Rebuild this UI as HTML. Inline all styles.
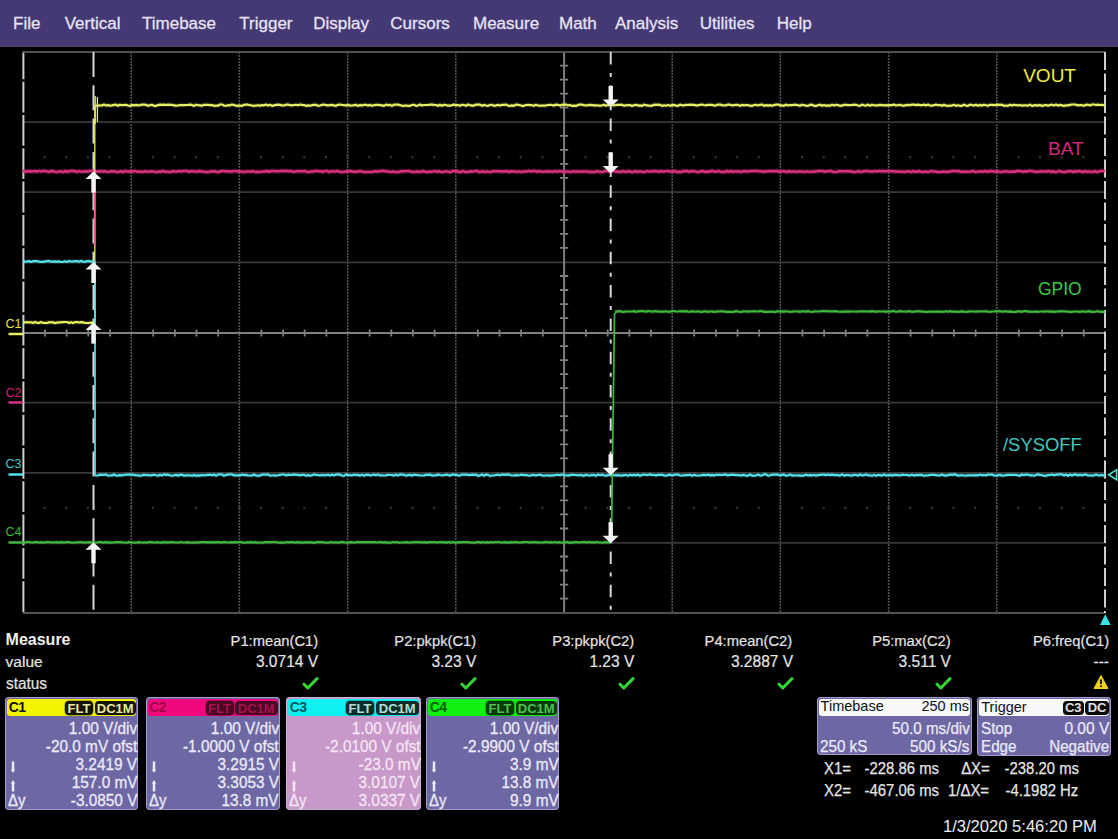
<!DOCTYPE html>
<html><head><meta charset="utf-8">
<style>
html,body{margin:0;padding:0;background:#000;}
body{width:1118px;height:839px;position:relative;overflow:hidden;font-family:"Liberation Sans",sans-serif;}
.t{position:absolute;line-height:1;white-space:pre;}
#menu{position:absolute;left:0;top:0;width:1118px;height:46.7px;background:#443875;box-shadow:inset 0 -2px 0 #4a4068;}
svg{position:absolute;left:0;top:0;}
.pn{position:absolute;background:#6b68a8;border-radius:4px;}
.hd{position:absolute;left:0;top:0;right:0;height:20px;border-radius:4px;}
.bx{position:absolute;top:4.5px;height:13.5px;background:#141414;border-radius:4px;}
</style></head><body>
<div id="menu"></div>
<svg width="1118" height="839" viewBox="0 0 1118 839">
<line x1="131.2" y1="52" x2="131.2" y2="613" stroke="#555555" stroke-width="1.5" stroke-dasharray="2 1"/>
<line x1="239.4" y1="52" x2="239.4" y2="613" stroke="#555555" stroke-width="1.5" stroke-dasharray="2 1"/>
<line x1="347.6" y1="52" x2="347.6" y2="613" stroke="#555555" stroke-width="1.5" stroke-dasharray="2 1"/>
<line x1="455.8" y1="52" x2="455.8" y2="613" stroke="#555555" stroke-width="1.5" stroke-dasharray="2 1"/>
<line x1="672.2" y1="52" x2="672.2" y2="613" stroke="#555555" stroke-width="1.5" stroke-dasharray="2 1"/>
<line x1="780.4" y1="52" x2="780.4" y2="613" stroke="#555555" stroke-width="1.5" stroke-dasharray="2 1"/>
<line x1="888.6" y1="52" x2="888.6" y2="613" stroke="#555555" stroke-width="1.5" stroke-dasharray="2 1"/>
<line x1="996.8" y1="52" x2="996.8" y2="613" stroke="#555555" stroke-width="1.5" stroke-dasharray="2 1"/>
<line x1="23" y1="122.1" x2="1105" y2="122.1" stroke="#383838" stroke-width="1.8"/>
<line x1="23" y1="192.2" x2="1105" y2="192.2" stroke="#383838" stroke-width="1.8"/>
<line x1="23" y1="262.4" x2="1105" y2="262.4" stroke="#383838" stroke-width="1.8"/>
<line x1="23" y1="402.6" x2="1105" y2="402.6" stroke="#383838" stroke-width="1.8"/>
<line x1="23" y1="472.8" x2="1105" y2="472.8" stroke="#383838" stroke-width="1.8"/>
<line x1="23" y1="542.9" x2="1105" y2="542.9" stroke="#383838" stroke-width="1.8"/>
<path d="M43.6,157.2h2M65.3,157.2h2M86.9,157.2h2M108.6,157.2h2M130.2,157.2h2M151.8,157.2h2M173.5,157.2h2M195.1,157.2h2M216.8,157.2h2M238.4,157.2h2M260.0,157.2h2M281.7,157.2h2M303.3,157.2h2M325.0,157.2h2M346.6,157.2h2M368.2,157.2h2M389.9,157.2h2M411.5,157.2h2M433.2,157.2h2M454.8,157.2h2M476.4,157.2h2M498.1,157.2h2M519.7,157.2h2M541.4,157.2h2M563.0,157.2h2M584.6,157.2h2M606.3,157.2h2M627.9,157.2h2M649.6,157.2h2M671.2,157.2h2M692.8,157.2h2M714.5,157.2h2M736.1,157.2h2M757.8,157.2h2M779.4,157.2h2M801.0,157.2h2M822.7,157.2h2M844.3,157.2h2M866.0,157.2h2M887.6,157.2h2M909.2,157.2h2M930.9,157.2h2M952.5,157.2h2M974.2,157.2h2M995.8,157.2h2M1017.4,157.2h2M1039.1,157.2h2M1060.7,157.2h2M1082.4,157.2h2M43.6,507.8h2M65.3,507.8h2M86.9,507.8h2M108.6,507.8h2M130.2,507.8h2M151.8,507.8h2M173.5,507.8h2M195.1,507.8h2M216.8,507.8h2M238.4,507.8h2M260.0,507.8h2M281.7,507.8h2M303.3,507.8h2M325.0,507.8h2M346.6,507.8h2M368.2,507.8h2M389.9,507.8h2M411.5,507.8h2M433.2,507.8h2M454.8,507.8h2M476.4,507.8h2M498.1,507.8h2M519.7,507.8h2M541.4,507.8h2M563.0,507.8h2M584.6,507.8h2M606.3,507.8h2M627.9,507.8h2M649.6,507.8h2M671.2,507.8h2M692.8,507.8h2M714.5,507.8h2M736.1,507.8h2M757.8,507.8h2M779.4,507.8h2M801.0,507.8h2M822.7,507.8h2M844.3,507.8h2M866.0,507.8h2M887.6,507.8h2M909.2,507.8h2M930.9,507.8h2M952.5,507.8h2M974.2,507.8h2M995.8,507.8h2M1017.4,507.8h2M1039.1,507.8h2M1060.7,507.8h2M1082.4,507.8h2" stroke="#3c3c3c" stroke-width="2"/>
<line x1="564.1" y1="52" x2="564.1" y2="613" stroke="#7e7e7e" stroke-width="2"/>
<line x1="23" y1="333" x2="1105" y2="333" stroke="#7e7e7e" stroke-width="2"/>
<path d="M45.0,329.5V336.5M66.7,329.5V336.5M88.3,329.5V336.5M110.0,329.5V336.5M153.2,329.5V336.5M174.9,329.5V336.5M196.5,329.5V336.5M218.2,329.5V336.5M261.4,329.5V336.5M283.1,329.5V336.5M304.7,329.5V336.5M326.4,329.5V336.5M369.6,329.5V336.5M391.3,329.5V336.5M412.9,329.5V336.5M434.6,329.5V336.5M477.8,329.5V336.5M499.5,329.5V336.5M521.1,329.5V336.5M542.8,329.5V336.5M586.0,329.5V336.5M607.7,329.5V336.5M629.3,329.5V336.5M651.0,329.5V336.5M694.2,329.5V336.5M715.9,329.5V336.5M737.5,329.5V336.5M759.2,329.5V336.5M802.4,329.5V336.5M824.1,329.5V336.5M845.7,329.5V336.5M867.4,329.5V336.5M910.6,329.5V336.5M932.3,329.5V336.5M953.9,329.5V336.5M975.6,329.5V336.5M1018.8,329.5V336.5M1040.5,329.5V336.5M1062.1,329.5V336.5M1083.8,329.5V336.5M560,65.6H568.2M560,79.6H568.2M560,93.7H568.2M560,107.7H568.2M560,135.8H568.2M560,149.8H568.2M560,163.8H568.2M560,177.8H568.2M560,205.9H568.2M560,219.9H568.2M560,233.9H568.2M560,247.9H568.2M560,276.0H568.2M560,290.0H568.2M560,304.1H568.2M560,318.1H568.2M560,346.1H568.2M560,360.2H568.2M560,374.2H568.2M560,388.2H568.2M560,416.2H568.2M560,430.3H568.2M560,444.3H568.2M560,458.3H568.2M560,486.4H568.2M560,500.4H568.2M560,514.4H568.2M560,528.5H568.2M560,556.5H568.2M560,570.5H568.2M560,584.6H568.2M560,598.6H568.2" stroke="#7e7e7e" stroke-width="1.8"/>
<line x1="23.4" y1="51" x2="23.4" y2="614" stroke="#d0d0d0" stroke-width="2" stroke-dasharray="28.2 2.5 2.6 0"/>
<line x1="22" y1="52" x2="1105" y2="52" stroke="#505050" stroke-width="2"/>
<line x1="23" y1="613" x2="1105" y2="613" stroke="#525252" stroke-width="2"/>
<line x1="1105" y1="52" x2="1105" y2="613" stroke="#d0d0d0" stroke-width="2" stroke-dasharray="18 3.5"/>
<line x1="93.5" y1="52" x2="93.5" y2="613" stroke="#d8d8d8" stroke-width="2" stroke-dasharray="25 8.3"/>
<line x1="610.7" y1="52" x2="610.7" y2="613" stroke="#d8d8d8" stroke-width="2" stroke-dasharray="12.5 8.5 4 8.3"/>
<polyline points="23.0,171.3 25.0,171.1 27.0,171.7 29.0,171.0 31.0,171.5 33.0,171.3 35.0,171.0 37.0,171.5 39.0,170.9 41.0,171.4 43.0,171.0 45.0,171.0 47.0,171.4 49.0,171.9 51.0,171.0 53.0,171.2 55.0,171.7 57.0,172.0 59.0,171.6 61.0,171.4 63.0,172.1 65.0,171.0 67.0,171.9 69.0,171.2 71.0,171.1 73.0,171.0 75.0,171.3 77.0,171.9 79.0,171.1 81.0,171.6 83.0,171.7 85.0,171.3 87.0,171.6 89.0,171.0 91.0,171.0 93.0,171.1 95.0,171.7 97.0,171.4 99.0,171.3 101.0,171.6 103.0,171.4 105.0,171.3 107.0,171.9 109.0,171.7 111.0,171.2 113.0,171.6 115.0,171.5 117.0,172.0 119.0,171.8 121.0,171.2 123.0,172.1 125.0,171.0 127.0,171.4 129.0,171.8 131.0,171.1 133.0,171.5 135.0,170.9 137.0,171.7 139.0,171.8 141.0,171.6 143.0,172.0 145.0,171.3 147.0,171.7 149.0,171.6 151.0,171.6 153.0,171.4 155.0,171.9 157.0,172.0 159.0,171.5 161.0,171.7 163.0,171.0 165.0,171.7 167.0,171.7 169.0,172.1 171.0,171.9 173.0,171.2 175.0,171.4 177.0,171.7 179.0,170.9 181.0,171.5 183.0,171.1 185.0,171.0 187.0,171.0 189.0,171.8 191.0,171.1 193.0,171.2 195.0,171.4 197.0,171.9 199.0,171.0 201.0,171.4 203.0,171.6 205.0,172.0 207.0,171.9 209.0,171.9 211.0,171.2 213.0,171.4 215.0,171.3 217.0,172.0 219.0,172.0 221.0,171.1 223.0,171.1 225.0,171.2 227.0,171.2 229.0,171.5 231.0,171.6 233.0,171.2 235.0,170.9 237.0,171.4 239.0,171.3 241.0,171.6 243.0,172.0 245.0,171.7 247.0,171.5 249.0,171.6 251.0,171.7 253.0,171.0 255.0,172.0 257.0,171.8 259.0,171.9 261.0,171.9 263.0,171.4 265.0,171.4 267.0,171.0 269.0,171.7 271.0,171.0 273.0,171.0 275.0,171.2 277.0,171.1 279.0,171.3 281.0,171.0 283.0,170.9 285.0,171.1 287.0,171.0 289.0,171.3 291.0,170.9 293.0,171.9 295.0,171.6 297.0,171.1 299.0,171.2 301.0,171.3 303.0,171.3 305.0,171.0 307.0,171.9 309.0,172.1 311.0,171.5 313.0,171.5 315.0,171.0 317.0,171.0 319.0,171.3 321.0,171.2 323.0,171.9 325.0,171.1 327.0,170.9 329.0,172.0 331.0,171.5 333.0,171.1 335.0,171.6 337.0,170.9 339.0,171.5 341.0,172.1 343.0,171.9 345.0,171.7 347.0,171.2 349.0,171.3 351.0,171.1 353.0,171.8 355.0,171.5 357.0,171.8 359.0,171.3 361.0,171.2 363.0,171.9 365.0,172.1 367.0,171.9 369.0,171.9 371.0,171.9 373.0,171.8 375.0,171.2 377.0,171.5 379.0,171.3 381.0,170.9 383.0,170.9 385.0,171.2 387.0,171.2 389.0,171.7 391.0,172.0 393.0,171.4 395.0,172.0 397.0,172.1 399.0,172.0 401.0,171.3 403.0,171.2 405.0,171.2 407.0,171.1 409.0,171.1 411.0,171.6 413.0,172.0 415.0,171.9 417.0,171.5 419.0,171.7 421.0,171.9 423.0,171.0 425.0,171.7 427.0,172.0 429.0,171.8 431.0,171.8 433.0,171.5 435.0,171.1 437.0,171.8 439.0,171.3 441.0,171.9 443.0,172.1 445.0,171.4 447.0,171.4 449.0,172.0 451.0,171.8 453.0,171.1 455.0,171.1 457.0,171.1 459.0,172.0 461.0,171.9 463.0,171.1 465.0,171.9 467.0,172.1 469.0,171.7 471.0,171.3 473.0,171.6 475.0,171.1 477.0,170.9 479.0,172.1 481.0,171.7 483.0,171.5 485.0,172.0 487.0,171.4 489.0,171.9 491.0,171.9 493.0,171.2 495.0,171.2 497.0,171.3 499.0,171.2 501.0,171.6 503.0,171.2 505.0,171.4 507.0,171.1 509.0,172.0 511.0,171.3 513.0,171.4 515.0,171.6 517.0,172.0 519.0,171.4 521.0,172.0 523.0,171.5 525.0,171.5 527.0,171.5 529.0,170.9 531.0,171.4 533.0,171.1 535.0,170.9 537.0,171.9 539.0,171.1 541.0,171.5 543.0,171.8 545.0,171.6 547.0,171.3 549.0,171.5 551.0,171.6 553.0,171.8 555.0,171.0 557.0,171.6 559.0,171.2 561.0,171.2 563.0,171.8 565.0,171.5 567.0,171.6 569.0,171.8 571.0,172.0 573.0,171.4 575.0,171.6 577.0,171.5 579.0,171.5 581.0,171.7 583.0,171.4 585.0,171.5 587.0,171.5 589.0,172.0 591.0,171.7 593.0,172.0 595.0,172.0 597.0,171.2 599.0,171.6 601.0,172.0 603.0,171.9 605.0,171.1 607.0,171.0 609.0,171.4 611.0,171.0 613.0,171.2 615.0,171.0 617.0,171.7 619.0,171.8 621.0,172.0 623.0,171.1 625.0,171.8 627.0,171.7 629.0,171.1 631.0,172.0 633.0,172.1 635.0,171.2 637.0,172.0 639.0,171.4 641.0,171.5 643.0,172.1 645.0,171.9 647.0,171.1 649.0,171.4 651.0,171.5 653.0,171.3 655.0,171.1 657.0,171.3 659.0,171.8 661.0,170.9 663.0,171.6 665.0,171.4 667.0,170.9 669.0,171.3 671.0,171.6 673.0,171.5 675.0,171.0 677.0,172.1 679.0,171.8 681.0,172.1 683.0,171.0 685.0,171.2 687.0,170.9 689.0,171.8 691.0,171.2 693.0,171.1 695.0,171.4 697.0,172.0 699.0,171.9 701.0,171.2 703.0,171.1 705.0,172.0 707.0,171.6 709.0,171.7 711.0,171.0 713.0,171.0 715.0,171.7 717.0,171.4 719.0,171.0 721.0,172.0 723.0,171.7 725.0,171.9 727.0,171.0 729.0,171.9 731.0,171.0 733.0,171.9 735.0,171.4 737.0,171.3 739.0,171.6 741.0,172.0 743.0,171.2 745.0,171.1 747.0,171.5 749.0,171.2 751.0,171.0 753.0,171.1 755.0,171.0 757.0,171.1 759.0,171.3 761.0,171.3 763.0,171.8 765.0,171.2 767.0,171.5 769.0,171.1 771.0,171.3 773.0,170.9 775.0,171.2 777.0,170.9 779.0,171.8 781.0,171.6 783.0,171.1 785.0,171.5 787.0,172.0 789.0,171.0 791.0,171.9 793.0,171.4 795.0,171.5 797.0,171.9 799.0,171.4 801.0,171.5 803.0,171.7 805.0,172.1 807.0,171.3 809.0,171.9 811.0,171.7 813.0,171.7 815.0,171.4 817.0,171.3 819.0,171.0 821.0,171.1 823.0,171.0 825.0,171.8 827.0,171.2 829.0,171.1 831.0,171.0 833.0,171.9 835.0,171.9 837.0,171.7 839.0,171.2 841.0,171.2 843.0,171.3 845.0,171.5 847.0,171.1 849.0,171.4 851.0,171.2 853.0,172.1 855.0,172.1 857.0,171.6 859.0,171.2 861.0,172.1 863.0,171.3 865.0,171.3 867.0,170.9 869.0,171.4 871.0,171.5 873.0,171.5 875.0,171.1 877.0,171.5 879.0,170.9 881.0,171.2 883.0,171.0 885.0,171.4 887.0,171.0 889.0,170.9 891.0,171.3 893.0,171.2 895.0,171.6 897.0,171.5 899.0,171.8 901.0,171.7 903.0,171.8 905.0,172.0 907.0,171.4 909.0,171.3 911.0,172.1 913.0,171.1 915.0,171.8 917.0,171.7 919.0,171.0 921.0,171.9 923.0,172.0 925.0,171.7 927.0,171.8 929.0,171.9 931.0,171.1 933.0,171.5 935.0,171.5 937.0,171.9 939.0,171.9 941.0,171.9 943.0,171.6 945.0,172.0 947.0,171.7 949.0,171.7 951.0,171.2 953.0,170.9 955.0,171.1 957.0,171.3 959.0,171.0 961.0,171.9 963.0,171.6 965.0,171.7 967.0,171.7 969.0,171.7 971.0,171.5 973.0,170.9 975.0,171.9 977.0,171.8 979.0,171.5 981.0,171.5 983.0,171.7 985.0,171.0 987.0,171.8 989.0,171.2 991.0,171.0 993.0,171.2 995.0,171.8 997.0,171.1 999.0,171.8 1001.0,172.1 1003.0,171.5 1005.0,171.4 1007.0,171.5 1009.0,171.7 1011.0,171.8 1013.0,171.6 1015.0,171.7 1017.0,171.0 1019.0,171.1 1021.0,171.2 1023.0,171.8 1025.0,171.3 1027.0,171.6 1029.0,170.9 1031.0,171.0 1033.0,171.2 1035.0,171.7 1037.0,171.7 1039.0,171.7 1041.0,171.2 1043.0,171.5 1045.0,171.5 1047.0,171.5 1049.0,171.0 1051.0,172.0 1053.0,171.1 1055.0,172.1 1057.0,172.0 1059.0,170.9 1061.0,171.5 1063.0,171.9 1065.0,172.1 1067.0,171.4 1069.0,171.2 1071.0,171.2 1073.0,172.0 1075.0,171.2 1077.0,171.6 1079.0,171.1 1081.0,171.5 1083.0,172.0 1085.0,171.1 1087.0,171.9 1089.0,171.5 1091.0,172.0 1093.0,171.7 1095.0,171.2 1097.0,172.0 1099.0,171.5 1101.0,170.9 1103.0,170.9 1105.0,171.5" fill="none" stroke="#d83080" stroke-width="4.9" stroke-opacity="0.3" stroke-linejoin="round"/>
<polyline points="23.0,171.3 25.0,171.1 27.0,171.7 29.0,171.0 31.0,171.5 33.0,171.3 35.0,171.0 37.0,171.5 39.0,170.9 41.0,171.4 43.0,171.0 45.0,171.0 47.0,171.4 49.0,171.9 51.0,171.0 53.0,171.2 55.0,171.7 57.0,172.0 59.0,171.6 61.0,171.4 63.0,172.1 65.0,171.0 67.0,171.9 69.0,171.2 71.0,171.1 73.0,171.0 75.0,171.3 77.0,171.9 79.0,171.1 81.0,171.6 83.0,171.7 85.0,171.3 87.0,171.6 89.0,171.0 91.0,171.0 93.0,171.1 95.0,171.7 97.0,171.4 99.0,171.3 101.0,171.6 103.0,171.4 105.0,171.3 107.0,171.9 109.0,171.7 111.0,171.2 113.0,171.6 115.0,171.5 117.0,172.0 119.0,171.8 121.0,171.2 123.0,172.1 125.0,171.0 127.0,171.4 129.0,171.8 131.0,171.1 133.0,171.5 135.0,170.9 137.0,171.7 139.0,171.8 141.0,171.6 143.0,172.0 145.0,171.3 147.0,171.7 149.0,171.6 151.0,171.6 153.0,171.4 155.0,171.9 157.0,172.0 159.0,171.5 161.0,171.7 163.0,171.0 165.0,171.7 167.0,171.7 169.0,172.1 171.0,171.9 173.0,171.2 175.0,171.4 177.0,171.7 179.0,170.9 181.0,171.5 183.0,171.1 185.0,171.0 187.0,171.0 189.0,171.8 191.0,171.1 193.0,171.2 195.0,171.4 197.0,171.9 199.0,171.0 201.0,171.4 203.0,171.6 205.0,172.0 207.0,171.9 209.0,171.9 211.0,171.2 213.0,171.4 215.0,171.3 217.0,172.0 219.0,172.0 221.0,171.1 223.0,171.1 225.0,171.2 227.0,171.2 229.0,171.5 231.0,171.6 233.0,171.2 235.0,170.9 237.0,171.4 239.0,171.3 241.0,171.6 243.0,172.0 245.0,171.7 247.0,171.5 249.0,171.6 251.0,171.7 253.0,171.0 255.0,172.0 257.0,171.8 259.0,171.9 261.0,171.9 263.0,171.4 265.0,171.4 267.0,171.0 269.0,171.7 271.0,171.0 273.0,171.0 275.0,171.2 277.0,171.1 279.0,171.3 281.0,171.0 283.0,170.9 285.0,171.1 287.0,171.0 289.0,171.3 291.0,170.9 293.0,171.9 295.0,171.6 297.0,171.1 299.0,171.2 301.0,171.3 303.0,171.3 305.0,171.0 307.0,171.9 309.0,172.1 311.0,171.5 313.0,171.5 315.0,171.0 317.0,171.0 319.0,171.3 321.0,171.2 323.0,171.9 325.0,171.1 327.0,170.9 329.0,172.0 331.0,171.5 333.0,171.1 335.0,171.6 337.0,170.9 339.0,171.5 341.0,172.1 343.0,171.9 345.0,171.7 347.0,171.2 349.0,171.3 351.0,171.1 353.0,171.8 355.0,171.5 357.0,171.8 359.0,171.3 361.0,171.2 363.0,171.9 365.0,172.1 367.0,171.9 369.0,171.9 371.0,171.9 373.0,171.8 375.0,171.2 377.0,171.5 379.0,171.3 381.0,170.9 383.0,170.9 385.0,171.2 387.0,171.2 389.0,171.7 391.0,172.0 393.0,171.4 395.0,172.0 397.0,172.1 399.0,172.0 401.0,171.3 403.0,171.2 405.0,171.2 407.0,171.1 409.0,171.1 411.0,171.6 413.0,172.0 415.0,171.9 417.0,171.5 419.0,171.7 421.0,171.9 423.0,171.0 425.0,171.7 427.0,172.0 429.0,171.8 431.0,171.8 433.0,171.5 435.0,171.1 437.0,171.8 439.0,171.3 441.0,171.9 443.0,172.1 445.0,171.4 447.0,171.4 449.0,172.0 451.0,171.8 453.0,171.1 455.0,171.1 457.0,171.1 459.0,172.0 461.0,171.9 463.0,171.1 465.0,171.9 467.0,172.1 469.0,171.7 471.0,171.3 473.0,171.6 475.0,171.1 477.0,170.9 479.0,172.1 481.0,171.7 483.0,171.5 485.0,172.0 487.0,171.4 489.0,171.9 491.0,171.9 493.0,171.2 495.0,171.2 497.0,171.3 499.0,171.2 501.0,171.6 503.0,171.2 505.0,171.4 507.0,171.1 509.0,172.0 511.0,171.3 513.0,171.4 515.0,171.6 517.0,172.0 519.0,171.4 521.0,172.0 523.0,171.5 525.0,171.5 527.0,171.5 529.0,170.9 531.0,171.4 533.0,171.1 535.0,170.9 537.0,171.9 539.0,171.1 541.0,171.5 543.0,171.8 545.0,171.6 547.0,171.3 549.0,171.5 551.0,171.6 553.0,171.8 555.0,171.0 557.0,171.6 559.0,171.2 561.0,171.2 563.0,171.8 565.0,171.5 567.0,171.6 569.0,171.8 571.0,172.0 573.0,171.4 575.0,171.6 577.0,171.5 579.0,171.5 581.0,171.7 583.0,171.4 585.0,171.5 587.0,171.5 589.0,172.0 591.0,171.7 593.0,172.0 595.0,172.0 597.0,171.2 599.0,171.6 601.0,172.0 603.0,171.9 605.0,171.1 607.0,171.0 609.0,171.4 611.0,171.0 613.0,171.2 615.0,171.0 617.0,171.7 619.0,171.8 621.0,172.0 623.0,171.1 625.0,171.8 627.0,171.7 629.0,171.1 631.0,172.0 633.0,172.1 635.0,171.2 637.0,172.0 639.0,171.4 641.0,171.5 643.0,172.1 645.0,171.9 647.0,171.1 649.0,171.4 651.0,171.5 653.0,171.3 655.0,171.1 657.0,171.3 659.0,171.8 661.0,170.9 663.0,171.6 665.0,171.4 667.0,170.9 669.0,171.3 671.0,171.6 673.0,171.5 675.0,171.0 677.0,172.1 679.0,171.8 681.0,172.1 683.0,171.0 685.0,171.2 687.0,170.9 689.0,171.8 691.0,171.2 693.0,171.1 695.0,171.4 697.0,172.0 699.0,171.9 701.0,171.2 703.0,171.1 705.0,172.0 707.0,171.6 709.0,171.7 711.0,171.0 713.0,171.0 715.0,171.7 717.0,171.4 719.0,171.0 721.0,172.0 723.0,171.7 725.0,171.9 727.0,171.0 729.0,171.9 731.0,171.0 733.0,171.9 735.0,171.4 737.0,171.3 739.0,171.6 741.0,172.0 743.0,171.2 745.0,171.1 747.0,171.5 749.0,171.2 751.0,171.0 753.0,171.1 755.0,171.0 757.0,171.1 759.0,171.3 761.0,171.3 763.0,171.8 765.0,171.2 767.0,171.5 769.0,171.1 771.0,171.3 773.0,170.9 775.0,171.2 777.0,170.9 779.0,171.8 781.0,171.6 783.0,171.1 785.0,171.5 787.0,172.0 789.0,171.0 791.0,171.9 793.0,171.4 795.0,171.5 797.0,171.9 799.0,171.4 801.0,171.5 803.0,171.7 805.0,172.1 807.0,171.3 809.0,171.9 811.0,171.7 813.0,171.7 815.0,171.4 817.0,171.3 819.0,171.0 821.0,171.1 823.0,171.0 825.0,171.8 827.0,171.2 829.0,171.1 831.0,171.0 833.0,171.9 835.0,171.9 837.0,171.7 839.0,171.2 841.0,171.2 843.0,171.3 845.0,171.5 847.0,171.1 849.0,171.4 851.0,171.2 853.0,172.1 855.0,172.1 857.0,171.6 859.0,171.2 861.0,172.1 863.0,171.3 865.0,171.3 867.0,170.9 869.0,171.4 871.0,171.5 873.0,171.5 875.0,171.1 877.0,171.5 879.0,170.9 881.0,171.2 883.0,171.0 885.0,171.4 887.0,171.0 889.0,170.9 891.0,171.3 893.0,171.2 895.0,171.6 897.0,171.5 899.0,171.8 901.0,171.7 903.0,171.8 905.0,172.0 907.0,171.4 909.0,171.3 911.0,172.1 913.0,171.1 915.0,171.8 917.0,171.7 919.0,171.0 921.0,171.9 923.0,172.0 925.0,171.7 927.0,171.8 929.0,171.9 931.0,171.1 933.0,171.5 935.0,171.5 937.0,171.9 939.0,171.9 941.0,171.9 943.0,171.6 945.0,172.0 947.0,171.7 949.0,171.7 951.0,171.2 953.0,170.9 955.0,171.1 957.0,171.3 959.0,171.0 961.0,171.9 963.0,171.6 965.0,171.7 967.0,171.7 969.0,171.7 971.0,171.5 973.0,170.9 975.0,171.9 977.0,171.8 979.0,171.5 981.0,171.5 983.0,171.7 985.0,171.0 987.0,171.8 989.0,171.2 991.0,171.0 993.0,171.2 995.0,171.8 997.0,171.1 999.0,171.8 1001.0,172.1 1003.0,171.5 1005.0,171.4 1007.0,171.5 1009.0,171.7 1011.0,171.8 1013.0,171.6 1015.0,171.7 1017.0,171.0 1019.0,171.1 1021.0,171.2 1023.0,171.8 1025.0,171.3 1027.0,171.6 1029.0,170.9 1031.0,171.0 1033.0,171.2 1035.0,171.7 1037.0,171.7 1039.0,171.7 1041.0,171.2 1043.0,171.5 1045.0,171.5 1047.0,171.5 1049.0,171.0 1051.0,172.0 1053.0,171.1 1055.0,172.1 1057.0,172.0 1059.0,170.9 1061.0,171.5 1063.0,171.9 1065.0,172.1 1067.0,171.4 1069.0,171.2 1071.0,171.2 1073.0,172.0 1075.0,171.2 1077.0,171.6 1079.0,171.1 1081.0,171.5 1083.0,172.0 1085.0,171.1 1087.0,171.9 1089.0,171.5 1091.0,172.0 1093.0,171.7 1095.0,171.2 1097.0,172.0 1099.0,171.5 1101.0,170.9 1103.0,170.9 1105.0,171.5" fill="none" stroke="#d83080" stroke-width="2.5" stroke-linejoin="round"/>
<polyline points="23.0,322.4 25.0,322.3 27.0,322.1 29.0,322.3 31.0,322.3 33.0,322.9 35.0,321.9 37.0,322.8 39.0,322.9 41.0,322.0 43.0,323.0 45.0,322.8 47.0,323.0 49.0,322.2 51.0,322.3 53.0,322.4 55.0,323.1 57.0,322.6 59.0,322.3 61.0,322.4 63.0,322.2 65.0,322.0 67.0,322.0 69.0,322.9 71.0,322.2 73.0,323.0 75.0,322.2 77.0,322.2 79.0,322.5 81.0,322.1 83.0,322.3 85.0,323.0 87.0,323.0 89.0,322.9 91.0,322.7 93.0,323.0 94.8,322.5" fill="none" stroke="#e6f064" stroke-width="4.6" stroke-opacity="0.15" stroke-linejoin="round"/>
<polyline points="23.0,322.4 25.0,322.3 27.0,322.1 29.0,322.3 31.0,322.3 33.0,322.9 35.0,321.9 37.0,322.8 39.0,322.9 41.0,322.0 43.0,323.0 45.0,322.8 47.0,323.0 49.0,322.2 51.0,322.3 53.0,322.4 55.0,323.1 57.0,322.6 59.0,322.3 61.0,322.4 63.0,322.2 65.0,322.0 67.0,322.0 69.0,322.9 71.0,322.2 73.0,323.0 75.0,322.2 77.0,322.2 79.0,322.5 81.0,322.1 83.0,322.3 85.0,323.0 87.0,323.0 89.0,322.9 91.0,322.7 93.0,323.0 94.8,322.5" fill="none" stroke="#e6f064" stroke-width="2.2" stroke-linejoin="round"/>
<path d="M94.8,322V105" stroke="#e6f064" stroke-width="1.3"/>
<path d="M95.2,96V124M97.4,97V122" stroke="#e6f064" stroke-width="1.3"/>
<polyline points="95.5,105.5 98.0,105.8 100.0,105.3 102.0,105.5 104.0,104.6 106.0,105.5 108.0,105.1 110.0,105.6 112.0,105.4 114.0,104.9 116.0,104.6 118.0,105.8 120.0,104.7 122.0,105.2 124.0,105.0 126.0,104.9 128.0,105.5 130.0,105.9 132.0,104.9 134.0,105.4 136.0,104.9 138.0,105.3 140.0,105.1 142.0,104.7 144.0,104.7 146.0,104.8 148.0,105.8 150.0,105.2 152.0,104.8 154.0,105.8 156.0,105.9 158.0,105.1 160.0,104.7 162.0,104.8 164.0,104.6 166.0,105.0 168.0,104.6 170.0,104.8 172.0,104.9 174.0,105.3 176.0,105.7 178.0,105.5 180.0,105.1 182.0,105.1 184.0,105.2 186.0,105.0 188.0,105.0 190.0,104.6 192.0,104.9 194.0,105.9 196.0,104.7 198.0,105.2 200.0,105.4 202.0,105.7 204.0,104.8 206.0,104.9 208.0,104.8 210.0,105.1 212.0,105.1 214.0,105.8 216.0,105.7 218.0,105.7 220.0,104.5 222.0,104.5 224.0,105.5 226.0,105.8 228.0,105.2 230.0,105.3 232.0,104.5 234.0,105.0 236.0,105.8 238.0,105.7 240.0,105.7 242.0,105.9 244.0,104.8 246.0,104.7 248.0,104.7 250.0,105.2 252.0,105.5 254.0,105.8 256.0,105.5 258.0,105.4 260.0,105.6 262.0,105.1 264.0,105.3 266.0,104.6 268.0,105.6 270.0,104.8 272.0,105.8 274.0,105.4 276.0,104.9 278.0,104.7 280.0,104.9 282.0,105.4 284.0,105.5 286.0,104.7 288.0,104.6 290.0,105.2 292.0,105.3 294.0,105.0 296.0,104.8 298.0,105.3 300.0,104.5 302.0,104.9 304.0,105.1 306.0,105.8 308.0,105.4 310.0,105.7 312.0,105.2 314.0,104.8 316.0,104.8 318.0,105.8 320.0,105.5 322.0,104.9 324.0,104.5 326.0,105.2 328.0,105.4 330.0,105.1 332.0,104.9 334.0,105.4 336.0,105.8 338.0,104.8 340.0,104.5 342.0,105.0 344.0,105.1 346.0,105.5 348.0,104.8 350.0,105.6 352.0,105.5 354.0,105.2 356.0,104.8 358.0,105.9 360.0,104.9 362.0,105.6 364.0,104.8 366.0,104.8 368.0,105.6 370.0,104.9 372.0,105.8 374.0,105.2 376.0,104.8 378.0,104.8 380.0,105.1 382.0,105.4 384.0,105.8 386.0,104.7 388.0,105.1 390.0,104.8 392.0,105.9 394.0,104.7 396.0,104.6 398.0,104.6 400.0,105.1 402.0,105.8 404.0,105.7 406.0,105.5 408.0,105.9 410.0,105.8 412.0,105.0 414.0,104.8 416.0,105.8 418.0,105.5 420.0,104.5 422.0,105.4 424.0,105.0 426.0,105.0 428.0,105.0 430.0,104.7 432.0,104.5 434.0,104.9 436.0,105.0 438.0,105.8 440.0,104.7 442.0,105.8 444.0,104.8 446.0,105.0 448.0,105.7 450.0,105.7 452.0,105.1 454.0,104.6 456.0,105.2 458.0,105.0 460.0,105.8 462.0,104.8 464.0,105.0 466.0,105.8 468.0,104.5 470.0,105.1 472.0,105.6 474.0,105.6 476.0,104.6 478.0,104.5 480.0,104.6 482.0,105.8 484.0,104.9 486.0,105.5 488.0,105.8 490.0,105.0 492.0,104.9 494.0,105.8 496.0,105.4 498.0,104.9 500.0,105.5 502.0,104.9 504.0,104.9 506.0,104.5 508.0,105.6 510.0,105.8 512.0,105.4 514.0,105.8 516.0,104.5 518.0,104.8 520.0,105.2 522.0,105.8 524.0,105.8 526.0,105.0 528.0,104.9 530.0,105.1 532.0,105.2 534.0,105.8 536.0,104.8 538.0,105.6 540.0,105.5 542.0,105.7 544.0,105.6 546.0,105.4 548.0,105.0 550.0,104.9 552.0,105.0 554.0,105.6 556.0,104.6 558.0,104.8 560.0,105.6 562.0,104.8 564.0,104.6 566.0,104.5 568.0,105.3 570.0,105.0 572.0,105.9 574.0,105.7 576.0,105.9 578.0,104.9 580.0,104.6 582.0,104.6 584.0,105.2 586.0,105.5 588.0,105.1 590.0,104.8 592.0,105.1 594.0,105.4 596.0,105.4 598.0,105.5 600.0,105.7 602.0,105.4 604.0,104.7 606.0,105.7 608.0,104.9 610.0,105.3 612.0,105.0 614.0,105.5 616.0,104.8 618.0,104.8 620.0,104.8 622.0,104.7 624.0,105.7 626.0,105.3 628.0,105.0 630.0,105.1 632.0,105.9 634.0,105.2 636.0,104.8 638.0,105.6 640.0,105.4 642.0,105.9 644.0,104.6 646.0,105.2 648.0,105.6 650.0,105.7 652.0,105.8 654.0,104.6 656.0,104.9 658.0,104.7 660.0,104.8 662.0,105.9 664.0,105.3 666.0,105.8 668.0,105.0 670.0,105.7 672.0,105.1 674.0,104.9 676.0,105.6 678.0,105.8 680.0,104.6 682.0,105.3 684.0,105.4 686.0,104.8 688.0,105.0 690.0,104.7 692.0,104.8 694.0,104.9 696.0,105.3 698.0,105.4 700.0,104.8 702.0,104.5 704.0,105.0 706.0,105.4 708.0,104.8 710.0,104.9 712.0,104.8 714.0,105.6 716.0,105.3 718.0,104.6 720.0,104.6 722.0,105.1 724.0,105.3 726.0,105.4 728.0,104.6 730.0,104.7 732.0,105.5 734.0,105.1 736.0,104.9 738.0,104.9 740.0,105.8 742.0,104.9 744.0,105.3 746.0,105.0 748.0,105.1 750.0,105.7 752.0,105.9 754.0,105.0 756.0,104.8 758.0,105.5 760.0,104.8 762.0,104.5 764.0,105.8 766.0,105.1 768.0,105.6 770.0,105.1 772.0,105.7 774.0,105.1 776.0,104.7 778.0,104.5 780.0,105.3 782.0,105.4 784.0,105.8 786.0,104.6 788.0,105.4 790.0,105.0 792.0,105.2 794.0,104.7 796.0,104.9 798.0,105.2 800.0,105.8 802.0,104.7 804.0,105.2 806.0,105.6 808.0,105.9 810.0,104.8 812.0,104.7 814.0,105.8 816.0,105.9 818.0,105.2 820.0,104.6 822.0,105.8 824.0,105.0 826.0,105.8 828.0,105.4 830.0,105.7 832.0,104.7 834.0,105.6 836.0,104.8 838.0,105.1 840.0,105.7 842.0,105.7 844.0,104.8 846.0,104.8 848.0,105.1 850.0,105.2 852.0,105.0 854.0,104.7 856.0,104.8 858.0,105.5 860.0,105.8 862.0,104.6 864.0,105.3 866.0,105.6 868.0,104.6 870.0,105.7 872.0,104.7 874.0,105.3 876.0,105.3 878.0,105.4 880.0,104.9 882.0,105.1 884.0,105.3 886.0,105.1 888.0,105.4 890.0,105.1 892.0,105.1 894.0,104.5 896.0,105.4 898.0,105.2 900.0,104.8 902.0,105.6 904.0,105.6 906.0,105.1 908.0,104.8 910.0,105.2 912.0,104.6 914.0,104.7 916.0,105.1 918.0,104.6 920.0,105.1 922.0,105.2 924.0,104.6 926.0,105.4 928.0,104.6 930.0,105.5 932.0,105.6 934.0,105.2 936.0,104.6 938.0,105.2 940.0,105.0 942.0,105.8 944.0,104.7 946.0,105.7 948.0,105.9 950.0,105.5 952.0,105.6 954.0,104.8 956.0,105.9 958.0,105.2 960.0,105.8 962.0,105.8 964.0,104.7 966.0,105.6 968.0,105.8 970.0,104.6 972.0,105.0 974.0,105.6 976.0,104.7 978.0,105.8 980.0,104.9 982.0,105.6 984.0,104.7 986.0,105.2 988.0,105.8 990.0,104.8 992.0,104.9 994.0,105.2 996.0,104.9 998.0,104.6 1000.0,104.8 1002.0,104.7 1004.0,105.8 1006.0,105.5 1008.0,105.8 1010.0,104.7 1012.0,105.6 1014.0,104.7 1016.0,105.2 1018.0,105.4 1020.0,105.0 1022.0,105.7 1024.0,105.3 1026.0,105.3 1028.0,105.7 1030.0,104.6 1032.0,105.9 1034.0,105.4 1036.0,105.1 1038.0,105.6 1040.0,104.9 1042.0,105.9 1044.0,105.3 1046.0,105.0 1048.0,105.6 1050.0,105.1 1052.0,104.7 1054.0,105.5 1056.0,104.6 1058.0,105.6 1060.0,104.9 1062.0,105.4 1064.0,105.9 1066.0,105.3 1068.0,105.4 1070.0,104.9 1072.0,104.5 1074.0,104.5 1076.0,104.7 1078.0,105.4 1080.0,105.1 1082.0,105.2 1084.0,105.8 1086.0,104.7 1088.0,104.8 1090.0,105.4 1092.0,104.5 1094.0,104.5 1096.0,105.0 1098.0,104.6 1100.0,105.0 1102.0,104.8 1104.0,105.3 1105.0,105.3" fill="none" stroke="#e6f064" stroke-width="4.6" stroke-opacity="0.15" stroke-linejoin="round"/>
<polyline points="95.5,105.5 98.0,105.8 100.0,105.3 102.0,105.5 104.0,104.6 106.0,105.5 108.0,105.1 110.0,105.6 112.0,105.4 114.0,104.9 116.0,104.6 118.0,105.8 120.0,104.7 122.0,105.2 124.0,105.0 126.0,104.9 128.0,105.5 130.0,105.9 132.0,104.9 134.0,105.4 136.0,104.9 138.0,105.3 140.0,105.1 142.0,104.7 144.0,104.7 146.0,104.8 148.0,105.8 150.0,105.2 152.0,104.8 154.0,105.8 156.0,105.9 158.0,105.1 160.0,104.7 162.0,104.8 164.0,104.6 166.0,105.0 168.0,104.6 170.0,104.8 172.0,104.9 174.0,105.3 176.0,105.7 178.0,105.5 180.0,105.1 182.0,105.1 184.0,105.2 186.0,105.0 188.0,105.0 190.0,104.6 192.0,104.9 194.0,105.9 196.0,104.7 198.0,105.2 200.0,105.4 202.0,105.7 204.0,104.8 206.0,104.9 208.0,104.8 210.0,105.1 212.0,105.1 214.0,105.8 216.0,105.7 218.0,105.7 220.0,104.5 222.0,104.5 224.0,105.5 226.0,105.8 228.0,105.2 230.0,105.3 232.0,104.5 234.0,105.0 236.0,105.8 238.0,105.7 240.0,105.7 242.0,105.9 244.0,104.8 246.0,104.7 248.0,104.7 250.0,105.2 252.0,105.5 254.0,105.8 256.0,105.5 258.0,105.4 260.0,105.6 262.0,105.1 264.0,105.3 266.0,104.6 268.0,105.6 270.0,104.8 272.0,105.8 274.0,105.4 276.0,104.9 278.0,104.7 280.0,104.9 282.0,105.4 284.0,105.5 286.0,104.7 288.0,104.6 290.0,105.2 292.0,105.3 294.0,105.0 296.0,104.8 298.0,105.3 300.0,104.5 302.0,104.9 304.0,105.1 306.0,105.8 308.0,105.4 310.0,105.7 312.0,105.2 314.0,104.8 316.0,104.8 318.0,105.8 320.0,105.5 322.0,104.9 324.0,104.5 326.0,105.2 328.0,105.4 330.0,105.1 332.0,104.9 334.0,105.4 336.0,105.8 338.0,104.8 340.0,104.5 342.0,105.0 344.0,105.1 346.0,105.5 348.0,104.8 350.0,105.6 352.0,105.5 354.0,105.2 356.0,104.8 358.0,105.9 360.0,104.9 362.0,105.6 364.0,104.8 366.0,104.8 368.0,105.6 370.0,104.9 372.0,105.8 374.0,105.2 376.0,104.8 378.0,104.8 380.0,105.1 382.0,105.4 384.0,105.8 386.0,104.7 388.0,105.1 390.0,104.8 392.0,105.9 394.0,104.7 396.0,104.6 398.0,104.6 400.0,105.1 402.0,105.8 404.0,105.7 406.0,105.5 408.0,105.9 410.0,105.8 412.0,105.0 414.0,104.8 416.0,105.8 418.0,105.5 420.0,104.5 422.0,105.4 424.0,105.0 426.0,105.0 428.0,105.0 430.0,104.7 432.0,104.5 434.0,104.9 436.0,105.0 438.0,105.8 440.0,104.7 442.0,105.8 444.0,104.8 446.0,105.0 448.0,105.7 450.0,105.7 452.0,105.1 454.0,104.6 456.0,105.2 458.0,105.0 460.0,105.8 462.0,104.8 464.0,105.0 466.0,105.8 468.0,104.5 470.0,105.1 472.0,105.6 474.0,105.6 476.0,104.6 478.0,104.5 480.0,104.6 482.0,105.8 484.0,104.9 486.0,105.5 488.0,105.8 490.0,105.0 492.0,104.9 494.0,105.8 496.0,105.4 498.0,104.9 500.0,105.5 502.0,104.9 504.0,104.9 506.0,104.5 508.0,105.6 510.0,105.8 512.0,105.4 514.0,105.8 516.0,104.5 518.0,104.8 520.0,105.2 522.0,105.8 524.0,105.8 526.0,105.0 528.0,104.9 530.0,105.1 532.0,105.2 534.0,105.8 536.0,104.8 538.0,105.6 540.0,105.5 542.0,105.7 544.0,105.6 546.0,105.4 548.0,105.0 550.0,104.9 552.0,105.0 554.0,105.6 556.0,104.6 558.0,104.8 560.0,105.6 562.0,104.8 564.0,104.6 566.0,104.5 568.0,105.3 570.0,105.0 572.0,105.9 574.0,105.7 576.0,105.9 578.0,104.9 580.0,104.6 582.0,104.6 584.0,105.2 586.0,105.5 588.0,105.1 590.0,104.8 592.0,105.1 594.0,105.4 596.0,105.4 598.0,105.5 600.0,105.7 602.0,105.4 604.0,104.7 606.0,105.7 608.0,104.9 610.0,105.3 612.0,105.0 614.0,105.5 616.0,104.8 618.0,104.8 620.0,104.8 622.0,104.7 624.0,105.7 626.0,105.3 628.0,105.0 630.0,105.1 632.0,105.9 634.0,105.2 636.0,104.8 638.0,105.6 640.0,105.4 642.0,105.9 644.0,104.6 646.0,105.2 648.0,105.6 650.0,105.7 652.0,105.8 654.0,104.6 656.0,104.9 658.0,104.7 660.0,104.8 662.0,105.9 664.0,105.3 666.0,105.8 668.0,105.0 670.0,105.7 672.0,105.1 674.0,104.9 676.0,105.6 678.0,105.8 680.0,104.6 682.0,105.3 684.0,105.4 686.0,104.8 688.0,105.0 690.0,104.7 692.0,104.8 694.0,104.9 696.0,105.3 698.0,105.4 700.0,104.8 702.0,104.5 704.0,105.0 706.0,105.4 708.0,104.8 710.0,104.9 712.0,104.8 714.0,105.6 716.0,105.3 718.0,104.6 720.0,104.6 722.0,105.1 724.0,105.3 726.0,105.4 728.0,104.6 730.0,104.7 732.0,105.5 734.0,105.1 736.0,104.9 738.0,104.9 740.0,105.8 742.0,104.9 744.0,105.3 746.0,105.0 748.0,105.1 750.0,105.7 752.0,105.9 754.0,105.0 756.0,104.8 758.0,105.5 760.0,104.8 762.0,104.5 764.0,105.8 766.0,105.1 768.0,105.6 770.0,105.1 772.0,105.7 774.0,105.1 776.0,104.7 778.0,104.5 780.0,105.3 782.0,105.4 784.0,105.8 786.0,104.6 788.0,105.4 790.0,105.0 792.0,105.2 794.0,104.7 796.0,104.9 798.0,105.2 800.0,105.8 802.0,104.7 804.0,105.2 806.0,105.6 808.0,105.9 810.0,104.8 812.0,104.7 814.0,105.8 816.0,105.9 818.0,105.2 820.0,104.6 822.0,105.8 824.0,105.0 826.0,105.8 828.0,105.4 830.0,105.7 832.0,104.7 834.0,105.6 836.0,104.8 838.0,105.1 840.0,105.7 842.0,105.7 844.0,104.8 846.0,104.8 848.0,105.1 850.0,105.2 852.0,105.0 854.0,104.7 856.0,104.8 858.0,105.5 860.0,105.8 862.0,104.6 864.0,105.3 866.0,105.6 868.0,104.6 870.0,105.7 872.0,104.7 874.0,105.3 876.0,105.3 878.0,105.4 880.0,104.9 882.0,105.1 884.0,105.3 886.0,105.1 888.0,105.4 890.0,105.1 892.0,105.1 894.0,104.5 896.0,105.4 898.0,105.2 900.0,104.8 902.0,105.6 904.0,105.6 906.0,105.1 908.0,104.8 910.0,105.2 912.0,104.6 914.0,104.7 916.0,105.1 918.0,104.6 920.0,105.1 922.0,105.2 924.0,104.6 926.0,105.4 928.0,104.6 930.0,105.5 932.0,105.6 934.0,105.2 936.0,104.6 938.0,105.2 940.0,105.0 942.0,105.8 944.0,104.7 946.0,105.7 948.0,105.9 950.0,105.5 952.0,105.6 954.0,104.8 956.0,105.9 958.0,105.2 960.0,105.8 962.0,105.8 964.0,104.7 966.0,105.6 968.0,105.8 970.0,104.6 972.0,105.0 974.0,105.6 976.0,104.7 978.0,105.8 980.0,104.9 982.0,105.6 984.0,104.7 986.0,105.2 988.0,105.8 990.0,104.8 992.0,104.9 994.0,105.2 996.0,104.9 998.0,104.6 1000.0,104.8 1002.0,104.7 1004.0,105.8 1006.0,105.5 1008.0,105.8 1010.0,104.7 1012.0,105.6 1014.0,104.7 1016.0,105.2 1018.0,105.4 1020.0,105.0 1022.0,105.7 1024.0,105.3 1026.0,105.3 1028.0,105.7 1030.0,104.6 1032.0,105.9 1034.0,105.4 1036.0,105.1 1038.0,105.6 1040.0,104.9 1042.0,105.9 1044.0,105.3 1046.0,105.0 1048.0,105.6 1050.0,105.1 1052.0,104.7 1054.0,105.5 1056.0,104.6 1058.0,105.6 1060.0,104.9 1062.0,105.4 1064.0,105.9 1066.0,105.3 1068.0,105.4 1070.0,104.9 1072.0,104.5 1074.0,104.5 1076.0,104.7 1078.0,105.4 1080.0,105.1 1082.0,105.2 1084.0,105.8 1086.0,104.7 1088.0,104.8 1090.0,105.4 1092.0,104.5 1094.0,104.5 1096.0,105.0 1098.0,104.6 1100.0,105.0 1102.0,104.8 1104.0,105.3 1105.0,105.3" fill="none" stroke="#e6f064" stroke-width="2.2" stroke-linejoin="round"/>
<path d="M94.6,176V246" stroke="#f060a0" stroke-width="1.6"/>
<polyline points="23.0,261.1 25.0,261.6 27.0,261.5 29.0,261.1 31.0,262.0 33.0,261.2 35.0,261.1 37.0,261.0 39.0,261.7 41.0,261.9 43.0,261.8 45.0,261.4 47.0,261.2 49.0,260.9 51.0,261.7 53.0,261.6 55.0,261.3 57.0,261.7 59.0,261.4 61.0,262.0 63.0,261.8 65.0,261.2 67.0,262.0 69.0,261.0 71.0,261.5 73.0,261.4 75.0,261.2 77.0,261.0 79.0,261.8 81.0,260.9 83.0,261.6 85.0,262.0 87.0,261.1 89.0,261.1 91.0,261.6 93.0,261.5 94.3,261.5" fill="none" stroke="#55e2ec" stroke-width="4.6" stroke-opacity="0.15" stroke-linejoin="round"/>
<polyline points="23.0,261.1 25.0,261.6 27.0,261.5 29.0,261.1 31.0,262.0 33.0,261.2 35.0,261.1 37.0,261.0 39.0,261.7 41.0,261.9 43.0,261.8 45.0,261.4 47.0,261.2 49.0,260.9 51.0,261.7 53.0,261.6 55.0,261.3 57.0,261.7 59.0,261.4 61.0,262.0 63.0,261.8 65.0,261.2 67.0,262.0 69.0,261.0 71.0,261.5 73.0,261.4 75.0,261.2 77.0,261.0 79.0,261.8 81.0,260.9 83.0,261.6 85.0,262.0 87.0,261.1 89.0,261.1 91.0,261.6 93.0,261.5 94.3,261.5" fill="none" stroke="#55e2ec" stroke-width="2.2" stroke-linejoin="round"/>
<path d="M95,261.5V475.1" stroke="#55e2ec" stroke-width="1.7"/>
<polyline points="95.0,475.1 96.0,475.3 98.0,475.5 100.0,474.6 102.0,474.8 104.0,474.8 106.0,474.5 108.0,475.6 110.0,475.5 112.0,475.4 114.0,474.4 116.0,475.6 118.0,475.4 120.0,475.1 122.0,475.4 124.0,475.0 126.0,474.7 128.0,474.5 130.0,474.7 132.0,474.5 134.0,474.9 136.0,475.4 138.0,475.4 140.0,475.6 142.0,475.4 144.0,474.8 146.0,475.2 148.0,475.0 150.0,475.5 152.0,475.1 154.0,474.8 156.0,475.3 158.0,475.8 160.0,474.7 162.0,475.6 164.0,474.4 166.0,474.8 168.0,474.7 170.0,475.4 172.0,475.7 174.0,475.4 176.0,474.9 178.0,475.6 180.0,474.9 182.0,474.7 184.0,475.7 186.0,475.3 188.0,475.4 190.0,475.3 192.0,475.8 194.0,475.1 196.0,475.6 198.0,475.4 200.0,475.6 202.0,475.0 204.0,475.4 206.0,475.2 208.0,474.8 210.0,474.7 212.0,475.3 214.0,474.5 216.0,475.7 218.0,474.6 220.0,474.4 222.0,474.5 224.0,475.7 226.0,474.9 228.0,474.6 230.0,474.4 232.0,474.5 234.0,475.4 236.0,475.3 238.0,475.4 240.0,475.4 242.0,474.5 244.0,475.2 246.0,474.9 248.0,475.5 250.0,475.5 252.0,475.6 254.0,474.5 256.0,475.6 258.0,475.7 260.0,475.7 262.0,474.5 264.0,474.7 266.0,474.6 268.0,474.4 270.0,475.6 272.0,475.5 274.0,475.3 276.0,475.6 278.0,475.3 280.0,474.8 282.0,474.5 284.0,474.5 286.0,475.5 288.0,474.7 290.0,474.8 292.0,475.0 294.0,474.4 296.0,474.8 298.0,474.8 300.0,475.4 302.0,474.9 304.0,474.8 306.0,475.7 308.0,475.1 310.0,475.6 312.0,475.3 314.0,474.4 316.0,475.0 318.0,475.0 320.0,475.5 322.0,474.9 324.0,475.4 326.0,475.2 328.0,474.7 330.0,475.6 332.0,474.5 334.0,475.5 336.0,474.6 338.0,474.4 340.0,474.7 342.0,475.5 344.0,475.8 346.0,474.4 348.0,475.1 350.0,475.1 352.0,475.5 354.0,474.7 356.0,475.1 358.0,474.9 360.0,475.6 362.0,474.8 364.0,475.7 366.0,474.8 368.0,474.7 370.0,475.4 372.0,475.1 374.0,474.6 376.0,475.3 378.0,474.5 380.0,475.5 382.0,475.4 384.0,475.5 386.0,475.3 388.0,474.9 390.0,475.0 392.0,475.0 394.0,475.6 396.0,474.5 398.0,475.6 400.0,474.4 402.0,474.7 404.0,474.8 406.0,475.7 408.0,475.1 410.0,474.9 412.0,475.6 414.0,474.7 416.0,475.0 418.0,475.1 420.0,475.5 422.0,475.5 424.0,475.3 426.0,474.9 428.0,474.9 430.0,474.6 432.0,475.6 434.0,475.3 436.0,475.4 438.0,474.6 440.0,475.0 442.0,475.5 444.0,475.2 446.0,474.6 448.0,475.0 450.0,475.6 452.0,474.7 454.0,474.7 456.0,474.8 458.0,475.4 460.0,475.6 462.0,474.6 464.0,474.6 466.0,474.7 468.0,474.9 470.0,475.1 472.0,474.6 474.0,474.9 476.0,474.7 478.0,475.8 480.0,475.4 482.0,474.5 484.0,475.7 486.0,474.5 488.0,474.9 490.0,475.8 492.0,475.5 494.0,475.4 496.0,475.0 498.0,474.7 500.0,475.3 502.0,474.5 504.0,474.7 506.0,474.9 508.0,474.4 510.0,475.0 512.0,475.5 514.0,475.4 516.0,475.1 518.0,475.3 520.0,475.0 522.0,474.6 524.0,475.2 526.0,475.0 528.0,475.4 530.0,475.7 532.0,475.0 534.0,475.2 536.0,475.4 538.0,475.0 540.0,474.7 542.0,475.4 544.0,475.6 546.0,475.5 548.0,475.4 550.0,475.6 552.0,475.4 554.0,475.3 556.0,475.0 558.0,474.8 560.0,475.3 562.0,474.5 564.0,475.0 566.0,475.5 568.0,475.4 570.0,475.3 572.0,474.8 574.0,475.0 576.0,475.0 578.0,475.3 580.0,475.0 582.0,475.3 584.0,475.7 586.0,474.7 588.0,475.3 590.0,475.5 592.0,474.9 594.0,475.1 596.0,475.8 598.0,474.5 600.0,475.2 602.0,474.6 604.0,475.5 606.0,475.7 608.0,475.1 610.0,474.5 612.0,475.2 614.0,475.2 616.0,475.4 618.0,475.1 620.0,475.3 622.0,475.6 624.0,475.1 626.0,475.0 628.0,475.7 630.0,474.7 632.0,475.4 634.0,474.9 636.0,475.5 638.0,474.6 640.0,475.8 642.0,474.9 644.0,474.5 646.0,474.8 648.0,475.0 650.0,474.4 652.0,475.0 654.0,475.0 656.0,475.4 658.0,474.9 660.0,474.8 662.0,474.7 664.0,475.4 666.0,475.7 668.0,475.1 670.0,474.7 672.0,475.5 674.0,474.9 676.0,474.7 678.0,474.6 680.0,475.5 682.0,475.5 684.0,475.3 686.0,475.1 688.0,475.2 690.0,474.7 692.0,475.7 694.0,474.9 696.0,475.3 698.0,475.5 700.0,475.5 702.0,475.1 704.0,474.8 706.0,475.2 708.0,474.6 710.0,475.6 712.0,474.9 714.0,475.6 716.0,474.8 718.0,474.9 720.0,474.8 722.0,475.0 724.0,474.7 726.0,474.4 728.0,475.4 730.0,474.8 732.0,474.7 734.0,474.8 736.0,475.1 738.0,475.0 740.0,475.3 742.0,475.3 744.0,474.9 746.0,475.7 748.0,475.6 750.0,474.5 752.0,475.6 754.0,475.7 756.0,475.5 758.0,474.6 760.0,475.6 762.0,475.3 764.0,474.4 766.0,474.4 768.0,475.7 770.0,475.3 772.0,474.8 774.0,474.5 776.0,474.6 778.0,474.7 780.0,475.5 782.0,474.9 784.0,474.6 786.0,475.7 788.0,475.5 790.0,474.6 792.0,475.6 794.0,475.3 796.0,475.5 798.0,475.3 800.0,475.7 802.0,475.5 804.0,475.6 806.0,474.7 808.0,475.4 810.0,475.1 812.0,475.4 814.0,475.0 816.0,475.6 818.0,475.2 820.0,474.8 822.0,474.7 824.0,474.6 826.0,475.1 828.0,474.5 830.0,475.1 832.0,474.6 834.0,475.1 836.0,475.1 838.0,475.2 840.0,475.6 842.0,474.4 844.0,475.6 846.0,475.1 848.0,475.2 850.0,475.3 852.0,475.6 854.0,474.9 856.0,475.0 858.0,475.7 860.0,474.5 862.0,475.3 864.0,475.3 866.0,474.4 868.0,475.3 870.0,475.4 872.0,475.7 874.0,474.9 876.0,475.8 878.0,475.1 880.0,475.1 882.0,475.7 884.0,474.4 886.0,475.4 888.0,475.3 890.0,474.9 892.0,475.6 894.0,474.9 896.0,475.1 898.0,475.1 900.0,475.5 902.0,474.7 904.0,475.0 906.0,475.0 908.0,475.2 910.0,475.6 912.0,474.8 914.0,475.6 916.0,475.0 918.0,475.1 920.0,474.8 922.0,475.1 924.0,475.8 926.0,475.3 928.0,475.5 930.0,474.9 932.0,474.8 934.0,474.8 936.0,475.2 938.0,475.3 940.0,475.5 942.0,474.5 944.0,475.4 946.0,475.6 948.0,475.2 950.0,474.5 952.0,474.8 954.0,474.4 956.0,474.7 958.0,475.7 960.0,475.3 962.0,475.3 964.0,475.5 966.0,475.7 968.0,475.3 970.0,475.3 972.0,475.3 974.0,475.4 976.0,475.2 978.0,475.4 980.0,474.7 982.0,475.3 984.0,475.0 986.0,475.5 988.0,474.5 990.0,474.7 992.0,474.5 994.0,475.5 996.0,475.7 998.0,475.3 1000.0,474.9 1002.0,475.6 1004.0,475.5 1006.0,475.2 1008.0,474.8 1010.0,474.8 1012.0,475.0 1014.0,474.8 1016.0,475.0 1018.0,475.3 1020.0,475.7 1022.0,474.5 1024.0,475.2 1026.0,474.5 1028.0,474.6 1030.0,475.5 1032.0,475.2 1034.0,475.7 1036.0,475.0 1038.0,474.4 1040.0,474.9 1042.0,475.2 1044.0,475.7 1046.0,475.8 1048.0,475.1 1050.0,475.0 1052.0,474.5 1054.0,475.3 1056.0,474.7 1058.0,474.6 1060.0,474.4 1062.0,474.4 1064.0,475.4 1066.0,474.6 1068.0,475.8 1070.0,474.5 1072.0,475.6 1074.0,474.6 1076.0,474.4 1078.0,475.4 1080.0,474.7 1082.0,475.4 1084.0,474.7 1086.0,474.5 1088.0,475.5 1090.0,475.4 1092.0,475.6 1094.0,475.4 1096.0,474.5 1098.0,475.3 1100.0,475.4 1102.0,475.0 1104.0,475.7 1105.0,474.8" fill="none" stroke="#55e2ec" stroke-width="4.6" stroke-opacity="0.15" stroke-linejoin="round"/>
<polyline points="95.0,475.1 96.0,475.3 98.0,475.5 100.0,474.6 102.0,474.8 104.0,474.8 106.0,474.5 108.0,475.6 110.0,475.5 112.0,475.4 114.0,474.4 116.0,475.6 118.0,475.4 120.0,475.1 122.0,475.4 124.0,475.0 126.0,474.7 128.0,474.5 130.0,474.7 132.0,474.5 134.0,474.9 136.0,475.4 138.0,475.4 140.0,475.6 142.0,475.4 144.0,474.8 146.0,475.2 148.0,475.0 150.0,475.5 152.0,475.1 154.0,474.8 156.0,475.3 158.0,475.8 160.0,474.7 162.0,475.6 164.0,474.4 166.0,474.8 168.0,474.7 170.0,475.4 172.0,475.7 174.0,475.4 176.0,474.9 178.0,475.6 180.0,474.9 182.0,474.7 184.0,475.7 186.0,475.3 188.0,475.4 190.0,475.3 192.0,475.8 194.0,475.1 196.0,475.6 198.0,475.4 200.0,475.6 202.0,475.0 204.0,475.4 206.0,475.2 208.0,474.8 210.0,474.7 212.0,475.3 214.0,474.5 216.0,475.7 218.0,474.6 220.0,474.4 222.0,474.5 224.0,475.7 226.0,474.9 228.0,474.6 230.0,474.4 232.0,474.5 234.0,475.4 236.0,475.3 238.0,475.4 240.0,475.4 242.0,474.5 244.0,475.2 246.0,474.9 248.0,475.5 250.0,475.5 252.0,475.6 254.0,474.5 256.0,475.6 258.0,475.7 260.0,475.7 262.0,474.5 264.0,474.7 266.0,474.6 268.0,474.4 270.0,475.6 272.0,475.5 274.0,475.3 276.0,475.6 278.0,475.3 280.0,474.8 282.0,474.5 284.0,474.5 286.0,475.5 288.0,474.7 290.0,474.8 292.0,475.0 294.0,474.4 296.0,474.8 298.0,474.8 300.0,475.4 302.0,474.9 304.0,474.8 306.0,475.7 308.0,475.1 310.0,475.6 312.0,475.3 314.0,474.4 316.0,475.0 318.0,475.0 320.0,475.5 322.0,474.9 324.0,475.4 326.0,475.2 328.0,474.7 330.0,475.6 332.0,474.5 334.0,475.5 336.0,474.6 338.0,474.4 340.0,474.7 342.0,475.5 344.0,475.8 346.0,474.4 348.0,475.1 350.0,475.1 352.0,475.5 354.0,474.7 356.0,475.1 358.0,474.9 360.0,475.6 362.0,474.8 364.0,475.7 366.0,474.8 368.0,474.7 370.0,475.4 372.0,475.1 374.0,474.6 376.0,475.3 378.0,474.5 380.0,475.5 382.0,475.4 384.0,475.5 386.0,475.3 388.0,474.9 390.0,475.0 392.0,475.0 394.0,475.6 396.0,474.5 398.0,475.6 400.0,474.4 402.0,474.7 404.0,474.8 406.0,475.7 408.0,475.1 410.0,474.9 412.0,475.6 414.0,474.7 416.0,475.0 418.0,475.1 420.0,475.5 422.0,475.5 424.0,475.3 426.0,474.9 428.0,474.9 430.0,474.6 432.0,475.6 434.0,475.3 436.0,475.4 438.0,474.6 440.0,475.0 442.0,475.5 444.0,475.2 446.0,474.6 448.0,475.0 450.0,475.6 452.0,474.7 454.0,474.7 456.0,474.8 458.0,475.4 460.0,475.6 462.0,474.6 464.0,474.6 466.0,474.7 468.0,474.9 470.0,475.1 472.0,474.6 474.0,474.9 476.0,474.7 478.0,475.8 480.0,475.4 482.0,474.5 484.0,475.7 486.0,474.5 488.0,474.9 490.0,475.8 492.0,475.5 494.0,475.4 496.0,475.0 498.0,474.7 500.0,475.3 502.0,474.5 504.0,474.7 506.0,474.9 508.0,474.4 510.0,475.0 512.0,475.5 514.0,475.4 516.0,475.1 518.0,475.3 520.0,475.0 522.0,474.6 524.0,475.2 526.0,475.0 528.0,475.4 530.0,475.7 532.0,475.0 534.0,475.2 536.0,475.4 538.0,475.0 540.0,474.7 542.0,475.4 544.0,475.6 546.0,475.5 548.0,475.4 550.0,475.6 552.0,475.4 554.0,475.3 556.0,475.0 558.0,474.8 560.0,475.3 562.0,474.5 564.0,475.0 566.0,475.5 568.0,475.4 570.0,475.3 572.0,474.8 574.0,475.0 576.0,475.0 578.0,475.3 580.0,475.0 582.0,475.3 584.0,475.7 586.0,474.7 588.0,475.3 590.0,475.5 592.0,474.9 594.0,475.1 596.0,475.8 598.0,474.5 600.0,475.2 602.0,474.6 604.0,475.5 606.0,475.7 608.0,475.1 610.0,474.5 612.0,475.2 614.0,475.2 616.0,475.4 618.0,475.1 620.0,475.3 622.0,475.6 624.0,475.1 626.0,475.0 628.0,475.7 630.0,474.7 632.0,475.4 634.0,474.9 636.0,475.5 638.0,474.6 640.0,475.8 642.0,474.9 644.0,474.5 646.0,474.8 648.0,475.0 650.0,474.4 652.0,475.0 654.0,475.0 656.0,475.4 658.0,474.9 660.0,474.8 662.0,474.7 664.0,475.4 666.0,475.7 668.0,475.1 670.0,474.7 672.0,475.5 674.0,474.9 676.0,474.7 678.0,474.6 680.0,475.5 682.0,475.5 684.0,475.3 686.0,475.1 688.0,475.2 690.0,474.7 692.0,475.7 694.0,474.9 696.0,475.3 698.0,475.5 700.0,475.5 702.0,475.1 704.0,474.8 706.0,475.2 708.0,474.6 710.0,475.6 712.0,474.9 714.0,475.6 716.0,474.8 718.0,474.9 720.0,474.8 722.0,475.0 724.0,474.7 726.0,474.4 728.0,475.4 730.0,474.8 732.0,474.7 734.0,474.8 736.0,475.1 738.0,475.0 740.0,475.3 742.0,475.3 744.0,474.9 746.0,475.7 748.0,475.6 750.0,474.5 752.0,475.6 754.0,475.7 756.0,475.5 758.0,474.6 760.0,475.6 762.0,475.3 764.0,474.4 766.0,474.4 768.0,475.7 770.0,475.3 772.0,474.8 774.0,474.5 776.0,474.6 778.0,474.7 780.0,475.5 782.0,474.9 784.0,474.6 786.0,475.7 788.0,475.5 790.0,474.6 792.0,475.6 794.0,475.3 796.0,475.5 798.0,475.3 800.0,475.7 802.0,475.5 804.0,475.6 806.0,474.7 808.0,475.4 810.0,475.1 812.0,475.4 814.0,475.0 816.0,475.6 818.0,475.2 820.0,474.8 822.0,474.7 824.0,474.6 826.0,475.1 828.0,474.5 830.0,475.1 832.0,474.6 834.0,475.1 836.0,475.1 838.0,475.2 840.0,475.6 842.0,474.4 844.0,475.6 846.0,475.1 848.0,475.2 850.0,475.3 852.0,475.6 854.0,474.9 856.0,475.0 858.0,475.7 860.0,474.5 862.0,475.3 864.0,475.3 866.0,474.4 868.0,475.3 870.0,475.4 872.0,475.7 874.0,474.9 876.0,475.8 878.0,475.1 880.0,475.1 882.0,475.7 884.0,474.4 886.0,475.4 888.0,475.3 890.0,474.9 892.0,475.6 894.0,474.9 896.0,475.1 898.0,475.1 900.0,475.5 902.0,474.7 904.0,475.0 906.0,475.0 908.0,475.2 910.0,475.6 912.0,474.8 914.0,475.6 916.0,475.0 918.0,475.1 920.0,474.8 922.0,475.1 924.0,475.8 926.0,475.3 928.0,475.5 930.0,474.9 932.0,474.8 934.0,474.8 936.0,475.2 938.0,475.3 940.0,475.5 942.0,474.5 944.0,475.4 946.0,475.6 948.0,475.2 950.0,474.5 952.0,474.8 954.0,474.4 956.0,474.7 958.0,475.7 960.0,475.3 962.0,475.3 964.0,475.5 966.0,475.7 968.0,475.3 970.0,475.3 972.0,475.3 974.0,475.4 976.0,475.2 978.0,475.4 980.0,474.7 982.0,475.3 984.0,475.0 986.0,475.5 988.0,474.5 990.0,474.7 992.0,474.5 994.0,475.5 996.0,475.7 998.0,475.3 1000.0,474.9 1002.0,475.6 1004.0,475.5 1006.0,475.2 1008.0,474.8 1010.0,474.8 1012.0,475.0 1014.0,474.8 1016.0,475.0 1018.0,475.3 1020.0,475.7 1022.0,474.5 1024.0,475.2 1026.0,474.5 1028.0,474.6 1030.0,475.5 1032.0,475.2 1034.0,475.7 1036.0,475.0 1038.0,474.4 1040.0,474.9 1042.0,475.2 1044.0,475.7 1046.0,475.8 1048.0,475.1 1050.0,475.0 1052.0,474.5 1054.0,475.3 1056.0,474.7 1058.0,474.6 1060.0,474.4 1062.0,474.4 1064.0,475.4 1066.0,474.6 1068.0,475.8 1070.0,474.5 1072.0,475.6 1074.0,474.6 1076.0,474.4 1078.0,475.4 1080.0,474.7 1082.0,475.4 1084.0,474.7 1086.0,474.5 1088.0,475.5 1090.0,475.4 1092.0,475.6 1094.0,475.4 1096.0,474.5 1098.0,475.3 1100.0,475.4 1102.0,475.0 1104.0,475.7 1105.0,474.8" fill="none" stroke="#55e2ec" stroke-width="2.2" stroke-linejoin="round"/>
<polyline points="23.0,542.6 25.0,542.5 27.0,542.0 29.0,542.0 31.0,542.4 33.0,542.5 35.0,542.0 37.0,542.2 39.0,542.5 41.0,542.1 43.0,542.6 45.0,542.3 47.0,542.0 49.0,542.2 51.0,542.4 53.0,542.3 55.0,542.4 57.0,542.1 59.0,542.5 61.0,542.2 63.0,542.4 65.0,542.4 67.0,542.2 69.0,542.2 71.0,542.5 73.0,542.6 75.0,542.5 77.0,542.3 79.0,542.2 81.0,542.0 83.0,542.6 85.0,542.4 87.0,542.5 89.0,542.2 91.0,542.4 93.0,542.6 95.0,542.5 97.0,542.4 99.0,542.2 101.0,542.2 103.0,542.6 105.0,542.2 107.0,542.4 109.0,542.4 111.0,542.6 113.0,542.5 115.0,542.1 117.0,542.0 119.0,542.1 121.0,542.2 123.0,542.4 125.0,542.5 127.0,542.6 129.0,542.0 131.0,542.5 133.0,542.5 135.0,542.6 137.0,542.4 139.0,542.1 141.0,542.5 143.0,542.5 145.0,542.4 147.0,542.6 149.0,542.2 151.0,542.0 153.0,542.3 155.0,542.5 157.0,542.1 159.0,542.5 161.0,542.6 163.0,542.1 165.0,542.4 167.0,542.4 169.0,542.3 171.0,542.1 173.0,542.1 175.0,542.5 177.0,542.5 179.0,542.3 181.0,542.0 183.0,542.5 185.0,542.5 187.0,542.1 189.0,542.4 191.0,542.6 193.0,542.6 195.0,542.3 197.0,542.3 199.0,542.4 201.0,542.1 203.0,542.1 205.0,542.1 207.0,542.4 209.0,542.2 211.0,542.3 213.0,542.2 215.0,542.3 217.0,542.1 219.0,542.0 221.0,542.6 223.0,542.2 225.0,542.0 227.0,542.4 229.0,542.5 231.0,542.1 233.0,542.4 235.0,542.2 237.0,542.3 239.0,542.0 241.0,542.0 243.0,542.6 245.0,542.6 247.0,542.3 249.0,542.3 251.0,542.1 253.0,542.5 255.0,542.2 257.0,542.6 259.0,542.5 261.0,542.5 263.0,542.6 265.0,542.1 267.0,542.0 269.0,542.1 271.0,542.1 273.0,542.0 275.0,542.0 277.0,542.3 279.0,542.6 281.0,542.3 283.0,542.6 285.0,542.6 287.0,542.0 289.0,542.4 291.0,542.2 293.0,542.0 295.0,542.6 297.0,542.1 299.0,542.3 301.0,542.4 303.0,542.6 305.0,542.4 307.0,542.2 309.0,542.3 311.0,542.1 313.0,542.6 315.0,542.6 317.0,542.1 319.0,542.0 321.0,542.1 323.0,542.2 325.0,542.6 327.0,542.6 329.0,542.5 331.0,542.0 333.0,542.5 335.0,542.4 337.0,542.4 339.0,542.6 341.0,542.0 343.0,542.1 345.0,542.5 347.0,542.6 349.0,542.4 351.0,542.2 353.0,542.4 355.0,542.5 357.0,542.0 359.0,542.2 361.0,542.1 363.0,542.0 365.0,542.3 367.0,542.1 369.0,542.1 371.0,542.1 373.0,542.4 375.0,542.0 377.0,542.5 379.0,542.1 381.0,542.0 383.0,542.6 385.0,542.1 387.0,542.6 389.0,542.6 391.0,542.6 393.0,542.0 395.0,542.3 397.0,542.0 399.0,542.6 401.0,542.5 403.0,542.4 405.0,542.3 407.0,542.2 409.0,542.5 411.0,542.3 413.0,542.4 415.0,542.0 417.0,542.1 419.0,542.0 421.0,542.4 423.0,542.3 425.0,542.1 427.0,542.6 429.0,542.1 431.0,542.2 433.0,542.1 435.0,542.1 437.0,542.5 439.0,542.2 441.0,542.1 443.0,542.3 445.0,542.2 447.0,542.6 449.0,542.0 451.0,542.6 453.0,542.0 455.0,542.6 457.0,542.4 459.0,542.1 461.0,542.3 463.0,542.2 465.0,542.1 467.0,542.1 469.0,542.2 471.0,542.6 473.0,542.6 475.0,542.6 477.0,542.0 479.0,542.2 481.0,542.6 483.0,542.0 485.0,542.5 487.0,542.2 489.0,542.6 491.0,542.0 493.0,542.5 495.0,542.2 497.0,542.0 499.0,542.0 501.0,542.5 503.0,542.3 505.0,542.1 507.0,542.3 509.0,542.6 511.0,542.1 513.0,542.3 515.0,542.0 517.0,542.1 519.0,542.5 521.0,542.4 523.0,542.1 525.0,542.0 527.0,542.0 529.0,542.4 531.0,542.3 533.0,542.1 535.0,542.1 537.0,542.4 539.0,542.4 541.0,542.5 543.0,542.4 545.0,542.1 547.0,542.0 549.0,542.5 551.0,542.2 553.0,542.5 555.0,542.0 557.0,542.5 559.0,542.2 561.0,542.5 563.0,542.6 565.0,542.3 567.0,542.0 569.0,542.6 571.0,542.3 573.0,542.6 575.0,542.1 577.0,542.1 579.0,542.5 581.0,542.2 583.0,542.1 585.0,542.2 587.0,542.4 589.0,542.0 591.0,542.3 593.0,542.3 595.0,542.3 597.0,542.0 599.0,542.5 601.0,542.5 603.0,542.6 605.0,542.2 607.0,542.4 609.0,542.2 611.0,542.5" fill="none" stroke="#40b840" stroke-width="4.6" stroke-opacity="0.15" stroke-linejoin="round"/>
<polyline points="23.0,542.6 25.0,542.5 27.0,542.0 29.0,542.0 31.0,542.4 33.0,542.5 35.0,542.0 37.0,542.2 39.0,542.5 41.0,542.1 43.0,542.6 45.0,542.3 47.0,542.0 49.0,542.2 51.0,542.4 53.0,542.3 55.0,542.4 57.0,542.1 59.0,542.5 61.0,542.2 63.0,542.4 65.0,542.4 67.0,542.2 69.0,542.2 71.0,542.5 73.0,542.6 75.0,542.5 77.0,542.3 79.0,542.2 81.0,542.0 83.0,542.6 85.0,542.4 87.0,542.5 89.0,542.2 91.0,542.4 93.0,542.6 95.0,542.5 97.0,542.4 99.0,542.2 101.0,542.2 103.0,542.6 105.0,542.2 107.0,542.4 109.0,542.4 111.0,542.6 113.0,542.5 115.0,542.1 117.0,542.0 119.0,542.1 121.0,542.2 123.0,542.4 125.0,542.5 127.0,542.6 129.0,542.0 131.0,542.5 133.0,542.5 135.0,542.6 137.0,542.4 139.0,542.1 141.0,542.5 143.0,542.5 145.0,542.4 147.0,542.6 149.0,542.2 151.0,542.0 153.0,542.3 155.0,542.5 157.0,542.1 159.0,542.5 161.0,542.6 163.0,542.1 165.0,542.4 167.0,542.4 169.0,542.3 171.0,542.1 173.0,542.1 175.0,542.5 177.0,542.5 179.0,542.3 181.0,542.0 183.0,542.5 185.0,542.5 187.0,542.1 189.0,542.4 191.0,542.6 193.0,542.6 195.0,542.3 197.0,542.3 199.0,542.4 201.0,542.1 203.0,542.1 205.0,542.1 207.0,542.4 209.0,542.2 211.0,542.3 213.0,542.2 215.0,542.3 217.0,542.1 219.0,542.0 221.0,542.6 223.0,542.2 225.0,542.0 227.0,542.4 229.0,542.5 231.0,542.1 233.0,542.4 235.0,542.2 237.0,542.3 239.0,542.0 241.0,542.0 243.0,542.6 245.0,542.6 247.0,542.3 249.0,542.3 251.0,542.1 253.0,542.5 255.0,542.2 257.0,542.6 259.0,542.5 261.0,542.5 263.0,542.6 265.0,542.1 267.0,542.0 269.0,542.1 271.0,542.1 273.0,542.0 275.0,542.0 277.0,542.3 279.0,542.6 281.0,542.3 283.0,542.6 285.0,542.6 287.0,542.0 289.0,542.4 291.0,542.2 293.0,542.0 295.0,542.6 297.0,542.1 299.0,542.3 301.0,542.4 303.0,542.6 305.0,542.4 307.0,542.2 309.0,542.3 311.0,542.1 313.0,542.6 315.0,542.6 317.0,542.1 319.0,542.0 321.0,542.1 323.0,542.2 325.0,542.6 327.0,542.6 329.0,542.5 331.0,542.0 333.0,542.5 335.0,542.4 337.0,542.4 339.0,542.6 341.0,542.0 343.0,542.1 345.0,542.5 347.0,542.6 349.0,542.4 351.0,542.2 353.0,542.4 355.0,542.5 357.0,542.0 359.0,542.2 361.0,542.1 363.0,542.0 365.0,542.3 367.0,542.1 369.0,542.1 371.0,542.1 373.0,542.4 375.0,542.0 377.0,542.5 379.0,542.1 381.0,542.0 383.0,542.6 385.0,542.1 387.0,542.6 389.0,542.6 391.0,542.6 393.0,542.0 395.0,542.3 397.0,542.0 399.0,542.6 401.0,542.5 403.0,542.4 405.0,542.3 407.0,542.2 409.0,542.5 411.0,542.3 413.0,542.4 415.0,542.0 417.0,542.1 419.0,542.0 421.0,542.4 423.0,542.3 425.0,542.1 427.0,542.6 429.0,542.1 431.0,542.2 433.0,542.1 435.0,542.1 437.0,542.5 439.0,542.2 441.0,542.1 443.0,542.3 445.0,542.2 447.0,542.6 449.0,542.0 451.0,542.6 453.0,542.0 455.0,542.6 457.0,542.4 459.0,542.1 461.0,542.3 463.0,542.2 465.0,542.1 467.0,542.1 469.0,542.2 471.0,542.6 473.0,542.6 475.0,542.6 477.0,542.0 479.0,542.2 481.0,542.6 483.0,542.0 485.0,542.5 487.0,542.2 489.0,542.6 491.0,542.0 493.0,542.5 495.0,542.2 497.0,542.0 499.0,542.0 501.0,542.5 503.0,542.3 505.0,542.1 507.0,542.3 509.0,542.6 511.0,542.1 513.0,542.3 515.0,542.0 517.0,542.1 519.0,542.5 521.0,542.4 523.0,542.1 525.0,542.0 527.0,542.0 529.0,542.4 531.0,542.3 533.0,542.1 535.0,542.1 537.0,542.4 539.0,542.4 541.0,542.5 543.0,542.4 545.0,542.1 547.0,542.0 549.0,542.5 551.0,542.2 553.0,542.5 555.0,542.0 557.0,542.5 559.0,542.2 561.0,542.5 563.0,542.6 565.0,542.3 567.0,542.0 569.0,542.6 571.0,542.3 573.0,542.6 575.0,542.1 577.0,542.1 579.0,542.5 581.0,542.2 583.0,542.1 585.0,542.2 587.0,542.4 589.0,542.0 591.0,542.3 593.0,542.3 595.0,542.3 597.0,542.0 599.0,542.5 601.0,542.5 603.0,542.6 605.0,542.2 607.0,542.4 609.0,542.2 611.0,542.5" fill="none" stroke="#40b840" stroke-width="2.2" stroke-linejoin="round"/>
<path d="M610.8,542.5L611.5,536L614.5,314L617,311.5" fill="none" stroke="#40b840" stroke-width="1.7"/>
<polyline points="615.0,311.5 620.0,311.1 622.0,311.8 624.0,311.9 626.0,311.5 628.0,311.5 630.0,311.5 632.0,311.5 634.0,311.1 636.0,311.9 638.0,311.3 640.0,311.2 642.0,311.2 644.0,311.3 646.0,311.8 648.0,311.1 650.0,311.2 652.0,311.7 654.0,311.3 656.0,311.1 658.0,311.6 660.0,311.6 662.0,311.5 664.0,311.7 666.0,311.2 668.0,311.8 670.0,311.7 672.0,311.1 674.0,311.2 676.0,311.5 678.0,311.5 680.0,311.3 682.0,311.2 684.0,311.4 686.0,311.2 688.0,311.6 690.0,311.8 692.0,311.2 694.0,311.6 696.0,311.7 698.0,311.2 700.0,311.8 702.0,311.9 704.0,311.4 706.0,311.4 708.0,311.8 710.0,311.5 712.0,311.4 714.0,311.9 716.0,311.7 718.0,311.4 720.0,311.3 722.0,311.4 724.0,311.4 726.0,311.9 728.0,311.7 730.0,311.8 732.0,311.8 734.0,311.8 736.0,311.1 738.0,311.5 740.0,311.9 742.0,311.8 744.0,311.3 746.0,311.4 748.0,311.6 750.0,311.4 752.0,311.5 754.0,311.2 756.0,311.4 758.0,311.5 760.0,311.1 762.0,311.2 764.0,311.9 766.0,311.7 768.0,311.8 770.0,311.6 772.0,311.7 774.0,311.8 776.0,311.8 778.0,311.1 780.0,311.6 782.0,311.3 784.0,311.6 786.0,311.3 788.0,311.5 790.0,311.8 792.0,311.6 794.0,311.3 796.0,311.5 798.0,311.4 800.0,311.9 802.0,311.3 804.0,311.3 806.0,311.6 808.0,311.2 810.0,311.6 812.0,311.9 814.0,311.5 816.0,311.3 818.0,311.5 820.0,311.5 822.0,311.2 824.0,311.2 826.0,311.2 828.0,311.3 830.0,311.4 832.0,311.3 834.0,311.3 836.0,311.2 838.0,311.5 840.0,311.8 842.0,311.6 844.0,311.6 846.0,311.6 848.0,311.3 850.0,311.7 852.0,311.5 854.0,311.5 856.0,311.6 858.0,311.5 860.0,311.3 862.0,311.3 864.0,311.3 866.0,311.5 868.0,311.4 870.0,311.6 872.0,311.1 874.0,311.4 876.0,311.8 878.0,311.3 880.0,311.5 882.0,311.5 884.0,311.3 886.0,311.9 888.0,311.3 890.0,311.7 892.0,311.2 894.0,311.2 896.0,311.8 898.0,311.5 900.0,311.1 902.0,311.4 904.0,311.5 906.0,311.7 908.0,311.2 910.0,311.3 912.0,311.9 914.0,311.7 916.0,311.2 918.0,311.4 920.0,311.4 922.0,311.6 924.0,311.6 926.0,311.8 928.0,311.8 930.0,311.5 932.0,311.7 934.0,311.7 936.0,311.7 938.0,311.5 940.0,311.7 942.0,311.7 944.0,311.8 946.0,311.2 948.0,311.8 950.0,311.1 952.0,311.7 954.0,311.6 956.0,311.5 958.0,311.9 960.0,311.6 962.0,311.4 964.0,311.7 966.0,311.8 968.0,311.6 970.0,311.4 972.0,311.5 974.0,311.5 976.0,311.7 978.0,311.3 980.0,311.4 982.0,311.5 984.0,311.4 986.0,311.4 988.0,311.7 990.0,311.8 992.0,311.5 994.0,311.5 996.0,311.2 998.0,311.3 1000.0,311.2 1002.0,311.6 1004.0,311.6 1006.0,311.2 1008.0,311.8 1010.0,311.4 1012.0,311.8 1014.0,311.8 1016.0,311.9 1018.0,311.3 1020.0,311.4 1022.0,311.8 1024.0,311.1 1026.0,311.1 1028.0,311.6 1030.0,311.5 1032.0,311.8 1034.0,311.7 1036.0,311.5 1038.0,311.9 1040.0,311.5 1042.0,311.5 1044.0,311.6 1046.0,311.4 1048.0,311.4 1050.0,311.6 1052.0,311.4 1054.0,311.9 1056.0,311.6 1058.0,311.5 1060.0,311.2 1062.0,311.4 1064.0,311.4 1066.0,311.5 1068.0,311.6 1070.0,311.8 1072.0,311.9 1074.0,311.5 1076.0,311.5 1078.0,311.6 1080.0,311.9 1082.0,311.4 1084.0,311.5 1086.0,311.8 1088.0,311.2 1090.0,311.4 1092.0,311.9 1094.0,311.8 1096.0,311.5 1098.0,311.2 1100.0,311.8 1102.0,311.7 1104.0,311.8 1105.0,311.9" fill="none" stroke="#40b840" stroke-width="4.6" stroke-opacity="0.15" stroke-linejoin="round"/>
<polyline points="615.0,311.5 620.0,311.1 622.0,311.8 624.0,311.9 626.0,311.5 628.0,311.5 630.0,311.5 632.0,311.5 634.0,311.1 636.0,311.9 638.0,311.3 640.0,311.2 642.0,311.2 644.0,311.3 646.0,311.8 648.0,311.1 650.0,311.2 652.0,311.7 654.0,311.3 656.0,311.1 658.0,311.6 660.0,311.6 662.0,311.5 664.0,311.7 666.0,311.2 668.0,311.8 670.0,311.7 672.0,311.1 674.0,311.2 676.0,311.5 678.0,311.5 680.0,311.3 682.0,311.2 684.0,311.4 686.0,311.2 688.0,311.6 690.0,311.8 692.0,311.2 694.0,311.6 696.0,311.7 698.0,311.2 700.0,311.8 702.0,311.9 704.0,311.4 706.0,311.4 708.0,311.8 710.0,311.5 712.0,311.4 714.0,311.9 716.0,311.7 718.0,311.4 720.0,311.3 722.0,311.4 724.0,311.4 726.0,311.9 728.0,311.7 730.0,311.8 732.0,311.8 734.0,311.8 736.0,311.1 738.0,311.5 740.0,311.9 742.0,311.8 744.0,311.3 746.0,311.4 748.0,311.6 750.0,311.4 752.0,311.5 754.0,311.2 756.0,311.4 758.0,311.5 760.0,311.1 762.0,311.2 764.0,311.9 766.0,311.7 768.0,311.8 770.0,311.6 772.0,311.7 774.0,311.8 776.0,311.8 778.0,311.1 780.0,311.6 782.0,311.3 784.0,311.6 786.0,311.3 788.0,311.5 790.0,311.8 792.0,311.6 794.0,311.3 796.0,311.5 798.0,311.4 800.0,311.9 802.0,311.3 804.0,311.3 806.0,311.6 808.0,311.2 810.0,311.6 812.0,311.9 814.0,311.5 816.0,311.3 818.0,311.5 820.0,311.5 822.0,311.2 824.0,311.2 826.0,311.2 828.0,311.3 830.0,311.4 832.0,311.3 834.0,311.3 836.0,311.2 838.0,311.5 840.0,311.8 842.0,311.6 844.0,311.6 846.0,311.6 848.0,311.3 850.0,311.7 852.0,311.5 854.0,311.5 856.0,311.6 858.0,311.5 860.0,311.3 862.0,311.3 864.0,311.3 866.0,311.5 868.0,311.4 870.0,311.6 872.0,311.1 874.0,311.4 876.0,311.8 878.0,311.3 880.0,311.5 882.0,311.5 884.0,311.3 886.0,311.9 888.0,311.3 890.0,311.7 892.0,311.2 894.0,311.2 896.0,311.8 898.0,311.5 900.0,311.1 902.0,311.4 904.0,311.5 906.0,311.7 908.0,311.2 910.0,311.3 912.0,311.9 914.0,311.7 916.0,311.2 918.0,311.4 920.0,311.4 922.0,311.6 924.0,311.6 926.0,311.8 928.0,311.8 930.0,311.5 932.0,311.7 934.0,311.7 936.0,311.7 938.0,311.5 940.0,311.7 942.0,311.7 944.0,311.8 946.0,311.2 948.0,311.8 950.0,311.1 952.0,311.7 954.0,311.6 956.0,311.5 958.0,311.9 960.0,311.6 962.0,311.4 964.0,311.7 966.0,311.8 968.0,311.6 970.0,311.4 972.0,311.5 974.0,311.5 976.0,311.7 978.0,311.3 980.0,311.4 982.0,311.5 984.0,311.4 986.0,311.4 988.0,311.7 990.0,311.8 992.0,311.5 994.0,311.5 996.0,311.2 998.0,311.3 1000.0,311.2 1002.0,311.6 1004.0,311.6 1006.0,311.2 1008.0,311.8 1010.0,311.4 1012.0,311.8 1014.0,311.8 1016.0,311.9 1018.0,311.3 1020.0,311.4 1022.0,311.8 1024.0,311.1 1026.0,311.1 1028.0,311.6 1030.0,311.5 1032.0,311.8 1034.0,311.7 1036.0,311.5 1038.0,311.9 1040.0,311.5 1042.0,311.5 1044.0,311.6 1046.0,311.4 1048.0,311.4 1050.0,311.6 1052.0,311.4 1054.0,311.9 1056.0,311.6 1058.0,311.5 1060.0,311.2 1062.0,311.4 1064.0,311.4 1066.0,311.5 1068.0,311.6 1070.0,311.8 1072.0,311.9 1074.0,311.5 1076.0,311.5 1078.0,311.6 1080.0,311.9 1082.0,311.4 1084.0,311.5 1086.0,311.8 1088.0,311.2 1090.0,311.4 1092.0,311.9 1094.0,311.8 1096.0,311.5 1098.0,311.2 1100.0,311.8 1102.0,311.7 1104.0,311.8 1105.0,311.9" fill="none" stroke="#40b840" stroke-width="2.2" stroke-linejoin="round"/>
<path d="M8.5,334H23" stroke="#e6f064" stroke-width="2.5"/>
<path d="M8.5,402.5H23" stroke="#d83080" stroke-width="2.5"/>
<path d="M8.5,474.5H23" stroke="#55e2ec" stroke-width="2.5"/>
<path d="M8.5,542.5H23" stroke="#40b840" stroke-width="2.5"/>
<path d="M93.5,171.5 L101.5,179.0 H95.7 V192.5 H91.3 V179.0 H85.5 ZM93.5,262 L101.5,269.5 H95.7 V283 H91.3 V269.5 H85.5 ZM93.5,322.5 L101.5,330.0 H95.7 V343.5 H91.3 V330.0 H85.5 ZM93.5,542.3 L101.5,549.8 H95.7 V563.3 H91.3 V549.8 H85.5 ZM610.7,107 L618.7,99.5 H612.9000000000001 V86 H608.5 V99.5 H602.7 ZM610.7,173.5 L618.7,166.0 H612.9000000000001 V152.5 H608.5 V166.0 H602.7 ZM610.7,475.2 L618.7,467.7 H612.9000000000001 V454.2 H608.5 V467.7 H602.7 ZM610.7,543.2 L618.7,535.7 H612.9000000000001 V522.2 H608.5 V535.7 H602.7 Z" fill="#f4f4f4"/>
<path d="M1108.6,474.8 L1116.6,469.9 V479.7 Z" fill="none" stroke="#55dcc8" stroke-width="1.6"/>
<path d="M1105.3,614.3 L1110.6,625 H1100 Z" fill="#38e4e8"/>
</svg>
<div class="t" style="top:14.91px;font-size:17px;color:#e6e2f2;-webkit-text-stroke:0.3px #e6e2f2;left:13.00px;">File</div>
<div class="t" style="top:14.91px;font-size:17px;color:#e6e2f2;-webkit-text-stroke:0.3px #e6e2f2;left:64.70px;">Vertical</div>
<div class="t" style="top:14.91px;font-size:17px;color:#e6e2f2;-webkit-text-stroke:0.3px #e6e2f2;left:142.00px;">Timebase</div>
<div class="t" style="top:14.91px;font-size:17px;color:#e6e2f2;-webkit-text-stroke:0.3px #e6e2f2;left:239.30px;">Trigger</div>
<div class="t" style="top:14.91px;font-size:17px;color:#e6e2f2;-webkit-text-stroke:0.3px #e6e2f2;left:313.30px;">Display</div>
<div class="t" style="top:14.91px;font-size:17px;color:#e6e2f2;-webkit-text-stroke:0.3px #e6e2f2;left:390.30px;">Cursors</div>
<div class="t" style="top:14.91px;font-size:17px;color:#e6e2f2;-webkit-text-stroke:0.3px #e6e2f2;left:473.00px;">Measure</div>
<div class="t" style="top:14.91px;font-size:17px;color:#e6e2f2;-webkit-text-stroke:0.3px #e6e2f2;left:559.00px;">Math</div>
<div class="t" style="top:14.91px;font-size:17px;color:#e6e2f2;-webkit-text-stroke:0.3px #e6e2f2;left:615.00px;">Analysis</div>
<div class="t" style="top:14.91px;font-size:17px;color:#e6e2f2;-webkit-text-stroke:0.3px #e6e2f2;left:699.80px;">Utilities</div>
<div class="t" style="top:14.91px;font-size:17px;color:#e6e2f2;-webkit-text-stroke:0.3px #e6e2f2;left:776.80px;">Help</div>
<div class="t" style="top:65.92px;font-size:19px;color:#eeee40;left:1023.20px;">VOUT</div>
<div class="t" style="top:138.72px;font-size:19px;color:#d02878;left:1048.00px;">BAT</div>
<div class="t" style="top:278.92px;font-size:19px;color:#38c848;left:1037.80px;transform:scaleX(0.92);transform-origin:0 0;">GPIO</div>
<div class="t" style="top:434.72px;font-size:19px;color:#40c8c0;left:1003.20px;transform:scaleX(0.97);transform-origin:0 0;">/SYSOFF</div>
<div class="t" style="top:317.92px;font-size:12.5px;color:#e8e848;left:5.40px;">C1</div>
<div class="t" style="top:386.92px;font-size:12.5px;color:#d02070;left:5.40px;">C2</div>
<div class="t" style="top:458.42px;font-size:12.5px;color:#40c8d8;left:5.40px;">C3</div>
<div class="t" style="top:526.42px;font-size:12.5px;color:#30c030;left:5.40px;">C4</div>
<div class="t" style="top:631.66px;font-size:16px;color:#f0f0f0;font-weight:bold;left:5.60px;">Measure</div>
<div class="t" style="top:654.08px;font-size:15.5px;color:#e4e4e4;-webkit-text-stroke:0.2px #e4e4e4;left:5.60px;">value</div>
<div class="t" style="top:676.06px;font-size:16px;color:#e4e4e4;-webkit-text-stroke:0.2px #e4e4e4;left:5.60px;transform:scaleX(0.96);transform-origin:0 0;">status</div>
<div class="t" style="top:632.58px;font-size:15.5px;color:#e4e4e4;-webkit-text-stroke:0.2px #e4e4e4;right:800.00px;transform:scaleX(0.95);transform-origin:100% 0;">P1:mean(C1)</div>
<div class="t" style="top:654.16px;font-size:16px;color:#e4e4e4;-webkit-text-stroke:0.2px #e4e4e4;right:800.00px;transform:scaleX(0.97);transform-origin:100% 0;">3.0714 V</div>
<div class="t" style="top:632.58px;font-size:15.5px;color:#e4e4e4;-webkit-text-stroke:0.2px #e4e4e4;right:641.80px;transform:scaleX(0.95);transform-origin:100% 0;">P2:pkpk(C1)</div>
<div class="t" style="top:654.16px;font-size:16px;color:#e4e4e4;-webkit-text-stroke:0.2px #e4e4e4;right:641.80px;transform:scaleX(0.97);transform-origin:100% 0;">3.23 V</div>
<div class="t" style="top:632.58px;font-size:15.5px;color:#e4e4e4;-webkit-text-stroke:0.2px #e4e4e4;right:483.60px;transform:scaleX(0.95);transform-origin:100% 0;">P3:pkpk(C2)</div>
<div class="t" style="top:654.16px;font-size:16px;color:#e4e4e4;-webkit-text-stroke:0.2px #e4e4e4;right:483.60px;transform:scaleX(0.97);transform-origin:100% 0;">1.23 V</div>
<div class="t" style="top:632.58px;font-size:15.5px;color:#e4e4e4;-webkit-text-stroke:0.2px #e4e4e4;right:325.40px;transform:scaleX(0.95);transform-origin:100% 0;">P4:mean(C2)</div>
<div class="t" style="top:654.16px;font-size:16px;color:#e4e4e4;-webkit-text-stroke:0.2px #e4e4e4;right:325.40px;transform:scaleX(0.97);transform-origin:100% 0;">3.2887 V</div>
<div class="t" style="top:632.58px;font-size:15.5px;color:#e4e4e4;-webkit-text-stroke:0.2px #e4e4e4;right:167.20px;transform:scaleX(0.95);transform-origin:100% 0;">P5:max(C2)</div>
<div class="t" style="top:654.16px;font-size:16px;color:#e4e4e4;-webkit-text-stroke:0.2px #e4e4e4;right:167.20px;transform:scaleX(0.97);transform-origin:100% 0;">3.511 V</div>
<div class="t" style="top:632.58px;font-size:15.5px;color:#e4e4e4;-webkit-text-stroke:0.2px #e4e4e4;right:9.00px;transform:scaleX(0.95);transform-origin:100% 0;">P6:freq(C1)</div>
<div class="t" style="top:654.16px;font-size:16px;color:#e4e4e4;-webkit-text-stroke:0.2px #e4e4e4;right:9.00px;transform:scaleX(0.97);transform-origin:100% 0;">---</div>
<svg style="position:absolute;left:302.0px;top:675.5px" width="17" height="15" viewBox="0 0 17 15"><path d="M2,8.2 L5.8,12 L15,2.6" fill="none" stroke="#34d834" stroke-width="3" stroke-linecap="round" stroke-linejoin="round"/></svg>
<svg style="position:absolute;left:460.2px;top:675.5px" width="17" height="15" viewBox="0 0 17 15"><path d="M2,8.2 L5.8,12 L15,2.6" fill="none" stroke="#34d834" stroke-width="3" stroke-linecap="round" stroke-linejoin="round"/></svg>
<svg style="position:absolute;left:618.4px;top:675.5px" width="17" height="15" viewBox="0 0 17 15"><path d="M2,8.2 L5.8,12 L15,2.6" fill="none" stroke="#34d834" stroke-width="3" stroke-linecap="round" stroke-linejoin="round"/></svg>
<svg style="position:absolute;left:776.6px;top:675.5px" width="17" height="15" viewBox="0 0 17 15"><path d="M2,8.2 L5.8,12 L15,2.6" fill="none" stroke="#34d834" stroke-width="3" stroke-linecap="round" stroke-linejoin="round"/></svg>
<svg style="position:absolute;left:934.8px;top:675.5px" width="17" height="15" viewBox="0 0 17 15"><path d="M2,8.2 L5.8,12 L15,2.6" fill="none" stroke="#34d834" stroke-width="3" stroke-linecap="round" stroke-linejoin="round"/></svg>
<svg style="position:absolute;left:1093px;top:674px" width="16" height="16" viewBox="0 0 16 16"><path d="M8,1.5 L15,14.5 H1 Z" fill="#f0d020" stroke="#f0d020" stroke-width="1" stroke-linejoin="round"/><path d="M8,5.5V10M8,11.5V13" stroke="#000" stroke-width="1.8"/></svg>
<div class="pn" style="left:5px;top:696.5px;width:133px;height:113.5px;background:#6d68a4;box-shadow:inset 0 0 0 1px rgba(200,195,230,0.55)"></div>
<div style="position:absolute;left:7px;top:698.5px;width:129px;height:17.5px;background:#f4f400;border-radius:3px"></div>
<div class="t" style="top:699.85px;font-size:14px;color:#101000;letter-spacing:-0.6px;left:8.80px;font-weight:bold;">C1</div>
<div style="position:absolute;left:65px;top:701px;width:28px;height:13.5px;background:#141408;border-radius:4px;box-shadow:0 0 0 1px rgba(0,0,0,0.25)"></div>
<div style="position:absolute;left:94.5px;top:701px;width:41.5px;height:13.5px;background:#141408;border-radius:4px"></div>
<div class="t" style="top:701.60px;font-size:13px;color:#e8e8a0;font-weight:bold;left:79.00px;transform:translateX(-50%);">FLT</div>
<div class="t" style="top:701.60px;font-size:13px;color:#e8e8a0;font-weight:bold;left:115.25px;transform:translateX(-50%);">DC1M</div>
<div class="t" style="top:720.56px;font-size:16px;color:#ece8f8;-webkit-text-stroke:0.3px #ece8f8;right:980.50px;transform:scaleX(0.96);transform-origin:100% 0;">1.00 V/div</div>
<div class="t" style="top:738.76px;font-size:16px;color:#ece8f8;-webkit-text-stroke:0.3px #ece8f8;right:980.50px;transform:scaleX(0.96);transform-origin:100% 0;">-20.0 mV ofst</div>
<svg style="position:absolute;left:9.2px;top:760.8px" width="8" height="13" viewBox="0 0 8 13"><path d="M4,0.5V9" stroke="#ece8f8" stroke-width="2.5"/><path d="M1.8,8.5 L4,12 L6.2,8.5 Z" fill="#ece8f8"/></svg>
<div class="t" style="top:756.86px;font-size:16px;color:#ece8f8;-webkit-text-stroke:0.3px #ece8f8;right:980.50px;transform:scaleX(0.96);transform-origin:100% 0;">3.2419 V</div>
<svg style="position:absolute;left:9.2px;top:778.8000000000001px" width="8" height="13" viewBox="0 0 8 13"><path d="M4,4V12.5" stroke="#ece8f8" stroke-width="2.5"/><path d="M1.8,4.5 L4,1 L6.2,4.5 Z" fill="#ece8f8"/></svg>
<div class="t" style="top:775.06px;font-size:16px;color:#ece8f8;-webkit-text-stroke:0.3px #ece8f8;right:980.50px;transform:scaleX(0.96);transform-origin:100% 0;">157.0 mV</div>
<div class="t" style="top:793.26px;font-size:16px;color:#ece8f8;-webkit-text-stroke:0.3px #ece8f8;left:8.30px;transform:scaleX(0.93);transform-origin:0 0;">Δy</div>
<div class="t" style="top:793.26px;font-size:16px;color:#ece8f8;-webkit-text-stroke:0.3px #ece8f8;right:980.50px;transform:scaleX(0.96);transform-origin:100% 0;">-3.0850 V</div>
<div class="pn" style="left:145.5px;top:696.5px;width:134.0px;height:113.5px;background:#6d68a4;box-shadow:inset 0 0 0 1px rgba(200,195,230,0.55)"></div>
<div style="position:absolute;left:147.5px;top:698.5px;width:130.0px;height:17.5px;background:#f0087c;border-radius:3px"></div>
<div class="t" style="top:699.85px;font-size:14px;color:#a00848;letter-spacing:-0.6px;left:149.30px;font-weight:bold;">C2</div>
<div style="position:absolute;left:205.5px;top:701px;width:28px;height:13.5px;background:#4a0822;border-radius:4px;box-shadow:0 0 0 1px rgba(0,0,0,0.25)"></div>
<div style="position:absolute;left:235.0px;top:701px;width:42.5px;height:13.5px;background:#4a0822;border-radius:4px"></div>
<div class="t" style="top:701.60px;font-size:13px;color:#a81050;font-weight:bold;left:219.50px;transform:translateX(-50%);">FLT</div>
<div class="t" style="top:701.60px;font-size:13px;color:#a81050;font-weight:bold;left:256.25px;transform:translateX(-50%);">DC1M</div>
<div class="t" style="top:720.56px;font-size:16px;color:#ece8f8;-webkit-text-stroke:0.3px #ece8f8;right:839.00px;transform:scaleX(0.96);transform-origin:100% 0;">1.00 V/div</div>
<div class="t" style="top:738.76px;font-size:16px;color:#ece8f8;-webkit-text-stroke:0.3px #ece8f8;right:839.00px;transform:scaleX(0.96);transform-origin:100% 0;">-1.0000 V ofst</div>
<svg style="position:absolute;left:149.7px;top:760.8px" width="8" height="13" viewBox="0 0 8 13"><path d="M4,0.5V9" stroke="#ece8f8" stroke-width="2.5"/><path d="M1.8,8.5 L4,12 L6.2,8.5 Z" fill="#ece8f8"/></svg>
<div class="t" style="top:756.86px;font-size:16px;color:#ece8f8;-webkit-text-stroke:0.3px #ece8f8;right:839.00px;transform:scaleX(0.96);transform-origin:100% 0;">3.2915 V</div>
<svg style="position:absolute;left:149.7px;top:778.8000000000001px" width="8" height="13" viewBox="0 0 8 13"><path d="M4,4V12.5" stroke="#ece8f8" stroke-width="2.5"/><path d="M1.8,4.5 L4,1 L6.2,4.5 Z" fill="#ece8f8"/></svg>
<div class="t" style="top:775.06px;font-size:16px;color:#ece8f8;-webkit-text-stroke:0.3px #ece8f8;right:839.00px;transform:scaleX(0.96);transform-origin:100% 0;">3.3053 V</div>
<div class="t" style="top:793.26px;font-size:16px;color:#ece8f8;-webkit-text-stroke:0.3px #ece8f8;left:148.80px;transform:scaleX(0.93);transform-origin:0 0;">Δy</div>
<div class="t" style="top:793.26px;font-size:16px;color:#ece8f8;-webkit-text-stroke:0.3px #ece8f8;right:839.00px;transform:scaleX(0.96);transform-origin:100% 0;">13.8 mV</div>
<div class="pn" style="left:286px;top:696.5px;width:135px;height:113.5px;background:#c898c8;box-shadow:inset 0 0 0 1px rgba(200,195,230,0.55)"></div>
<div style="position:absolute;left:288px;top:698.5px;width:131px;height:17.5px;background:#10f0f0;border-radius:3px"></div>
<div class="t" style="top:699.85px;font-size:14px;color:#005a60;letter-spacing:-0.6px;left:289.80px;font-weight:bold;">C3</div>
<div style="position:absolute;left:346px;top:701px;width:28px;height:13.5px;background:#0c2c2c;border-radius:4px;box-shadow:0 0 0 1px rgba(0,0,0,0.25)"></div>
<div style="position:absolute;left:375.5px;top:701px;width:43.5px;height:13.5px;background:#0c2c2c;border-radius:4px"></div>
<div class="t" style="top:701.60px;font-size:13px;color:#b0e0d8;font-weight:bold;left:360.00px;transform:translateX(-50%);">FLT</div>
<div class="t" style="top:701.60px;font-size:13px;color:#b0e0d8;font-weight:bold;left:397.25px;transform:translateX(-50%);">DC1M</div>
<div class="t" style="top:720.56px;font-size:16px;color:#f4e4f4;-webkit-text-stroke:0.3px #f4e4f4;right:697.50px;transform:scaleX(0.96);transform-origin:100% 0;">1.00 V/div</div>
<div class="t" style="top:738.76px;font-size:16px;color:#f4e4f4;-webkit-text-stroke:0.3px #f4e4f4;right:697.50px;transform:scaleX(0.96);transform-origin:100% 0;">-2.0100 V ofst</div>
<svg style="position:absolute;left:290.2px;top:760.8px" width="8" height="13" viewBox="0 0 8 13"><path d="M4,0.5V9" stroke="#f4e4f4" stroke-width="2.5"/><path d="M1.8,8.5 L4,12 L6.2,8.5 Z" fill="#f4e4f4"/></svg>
<div class="t" style="top:756.86px;font-size:16px;color:#f4e4f4;-webkit-text-stroke:0.3px #f4e4f4;right:697.50px;transform:scaleX(0.96);transform-origin:100% 0;">-23.0 mV</div>
<svg style="position:absolute;left:290.2px;top:778.8000000000001px" width="8" height="13" viewBox="0 0 8 13"><path d="M4,4V12.5" stroke="#f4e4f4" stroke-width="2.5"/><path d="M1.8,4.5 L4,1 L6.2,4.5 Z" fill="#f4e4f4"/></svg>
<div class="t" style="top:775.06px;font-size:16px;color:#f4e4f4;-webkit-text-stroke:0.3px #f4e4f4;right:697.50px;transform:scaleX(0.96);transform-origin:100% 0;">3.0107 V</div>
<div class="t" style="top:793.26px;font-size:16px;color:#f4e4f4;-webkit-text-stroke:0.3px #f4e4f4;left:289.30px;transform:scaleX(0.93);transform-origin:0 0;">Δy</div>
<div class="t" style="top:793.26px;font-size:16px;color:#f4e4f4;-webkit-text-stroke:0.3px #f4e4f4;right:697.50px;transform:scaleX(0.96);transform-origin:100% 0;">3.0337 V</div>
<div class="pn" style="left:426px;top:696.5px;width:133px;height:113.5px;background:#6d68a4;box-shadow:inset 0 0 0 1px rgba(200,195,230,0.55)"></div>
<div style="position:absolute;left:428px;top:698.5px;width:129px;height:17.5px;background:#10f010;border-radius:3px"></div>
<div class="t" style="top:699.85px;font-size:14px;color:#006000;letter-spacing:-0.6px;left:429.80px;font-weight:bold;">C4</div>
<div style="position:absolute;left:486px;top:701px;width:28px;height:13.5px;background:#063a06;border-radius:4px;box-shadow:0 0 0 1px rgba(0,0,0,0.25)"></div>
<div style="position:absolute;left:515.5px;top:701px;width:41.5px;height:13.5px;background:#063a06;border-radius:4px"></div>
<div class="t" style="top:701.60px;font-size:13px;color:#50c050;font-weight:bold;left:500.00px;transform:translateX(-50%);">FLT</div>
<div class="t" style="top:701.60px;font-size:13px;color:#50c050;font-weight:bold;left:536.25px;transform:translateX(-50%);">DC1M</div>
<div class="t" style="top:720.56px;font-size:16px;color:#ece8f8;-webkit-text-stroke:0.3px #ece8f8;right:559.50px;transform:scaleX(0.96);transform-origin:100% 0;">1.00 V/div</div>
<div class="t" style="top:738.76px;font-size:16px;color:#ece8f8;-webkit-text-stroke:0.3px #ece8f8;right:559.50px;transform:scaleX(0.96);transform-origin:100% 0;">-2.9900 V ofst</div>
<svg style="position:absolute;left:430.2px;top:760.8px" width="8" height="13" viewBox="0 0 8 13"><path d="M4,0.5V9" stroke="#ece8f8" stroke-width="2.5"/><path d="M1.8,8.5 L4,12 L6.2,8.5 Z" fill="#ece8f8"/></svg>
<div class="t" style="top:756.86px;font-size:16px;color:#ece8f8;-webkit-text-stroke:0.3px #ece8f8;right:559.50px;transform:scaleX(0.96);transform-origin:100% 0;">3.9 mV</div>
<svg style="position:absolute;left:430.2px;top:778.8000000000001px" width="8" height="13" viewBox="0 0 8 13"><path d="M4,4V12.5" stroke="#ece8f8" stroke-width="2.5"/><path d="M1.8,4.5 L4,1 L6.2,4.5 Z" fill="#ece8f8"/></svg>
<div class="t" style="top:775.06px;font-size:16px;color:#ece8f8;-webkit-text-stroke:0.3px #ece8f8;right:559.50px;transform:scaleX(0.96);transform-origin:100% 0;">13.8 mV</div>
<div class="t" style="top:793.26px;font-size:16px;color:#ece8f8;-webkit-text-stroke:0.3px #ece8f8;left:429.30px;transform:scaleX(0.93);transform-origin:0 0;">Δy</div>
<div class="t" style="top:793.26px;font-size:16px;color:#ece8f8;-webkit-text-stroke:0.3px #ece8f8;right:559.50px;transform:scaleX(0.96);transform-origin:100% 0;">9.9 mV</div>
<div class="pn" style="left:817px;top:696.8px;width:154.5px;height:58px;background:#6d68a4;box-shadow:inset 0 0 0 1px rgba(200,195,230,0.55)"></div>
<div style="position:absolute;left:819px;top:699px;width:150.5px;height:17px;background:#f8f8f8;border-radius:3px"></div>
<div class="t" style="top:699.23px;font-size:14.5px;color:#101010;left:820.60px;">Timebase</div>
<div class="t" style="top:699.23px;font-size:14.5px;color:#101010;right:149.00px;">250 ms</div>
<div class="t" style="top:720.56px;font-size:16px;color:#ece8f8;-webkit-text-stroke:0.25px #ece8f8;right:148.50px;transform:scaleX(0.95);transform-origin:100% 0;">50.0 ms/div</div>
<div class="t" style="top:738.56px;font-size:16px;color:#ece8f8;-webkit-text-stroke:0.25px #ece8f8;left:820.30px;transform:scaleX(0.95);transform-origin:0 0;">250 kS</div>
<div class="t" style="top:738.56px;font-size:16px;color:#ece8f8;-webkit-text-stroke:0.25px #ece8f8;right:148.50px;transform:scaleX(0.95);transform-origin:100% 0;">500 kS/s</div>
<div class="pn" style="left:977.3px;top:696.6px;width:133.7px;height:59px;background:#6d68a4;box-shadow:inset 0 0 0 1px rgba(200,195,230,0.55)"></div>
<div style="position:absolute;left:979.3px;top:699px;width:129.7px;height:17px;background:#f8f8f8;border-radius:3px"></div>
<div class="t" style="top:699.53px;font-size:14.5px;color:#101010;left:981.30px;">Trigger</div>
<div style="position:absolute;left:1062.7px;top:700.6px;width:21px;height:14px;background:#0a0a0a;border-radius:4px"></div>
<div style="position:absolute;left:1085.2px;top:700.6px;width:23.8px;height:14px;background:#0a0a0a;border-radius:4px"></div>
<div class="t" style="top:701.30px;font-size:13px;color:#e0e0e0;font-weight:bold;left:1073.20px;transform:translateX(-50%);">C3</div>
<div class="t" style="top:701.30px;font-size:13px;color:#e0e0e0;font-weight:bold;left:1097.10px;transform:translateX(-50%);">DC</div>
<div class="t" style="top:720.56px;font-size:16px;color:#ece8f8;-webkit-text-stroke:0.25px #ece8f8;left:980.60px;transform:scaleX(0.95);transform-origin:0 0;">Stop</div>
<div class="t" style="top:720.56px;font-size:16px;color:#ece8f8;-webkit-text-stroke:0.25px #ece8f8;right:8.50px;transform:scaleX(0.97);transform-origin:100% 0;">0.00 V</div>
<div class="t" style="top:738.56px;font-size:16px;color:#ece8f8;-webkit-text-stroke:0.25px #ece8f8;left:980.60px;transform:scaleX(0.95);transform-origin:0 0;">Edge</div>
<div class="t" style="top:738.56px;font-size:16px;color:#ece8f8;-webkit-text-stroke:0.25px #ece8f8;right:8.50px;transform:scaleX(0.95);transform-origin:100% 0;">Negative</div>
<div class="t" style="top:760.96px;font-size:16px;color:#e4e4e4;-webkit-text-stroke:0.25px #e4e4e4;left:824.20px;transform:scaleX(0.93);transform-origin:0 0;">X1=</div>
<div class="t" style="top:760.96px;font-size:16px;color:#e4e4e4;-webkit-text-stroke:0.25px #e4e4e4;right:179.40px;transform:scaleX(0.93);transform-origin:100% 0;">-228.86 ms</div>
<div class="t" style="top:760.96px;font-size:16px;color:#e4e4e4;-webkit-text-stroke:0.25px #e4e4e4;right:128.80px;transform:scaleX(0.93);transform-origin:100% 0;">ΔX=</div>
<div class="t" style="top:760.96px;font-size:16px;color:#e4e4e4;-webkit-text-stroke:0.25px #e4e4e4;right:39.40px;transform:scaleX(0.93);transform-origin:100% 0;">-238.20 ms</div>
<div class="t" style="top:783.46px;font-size:16px;color:#e4e4e4;-webkit-text-stroke:0.25px #e4e4e4;left:824.20px;transform:scaleX(0.93);transform-origin:0 0;">X2=</div>
<div class="t" style="top:783.46px;font-size:16px;color:#e4e4e4;-webkit-text-stroke:0.25px #e4e4e4;right:179.40px;transform:scaleX(0.93);transform-origin:100% 0;">-467.06 ms</div>
<div class="t" style="top:783.46px;font-size:16px;color:#e4e4e4;-webkit-text-stroke:0.25px #e4e4e4;right:128.80px;transform:scaleX(0.93);transform-origin:100% 0;">1/ΔX=</div>
<div class="t" style="top:783.46px;font-size:16px;color:#e4e4e4;-webkit-text-stroke:0.25px #e4e4e4;right:39.40px;transform:scaleX(0.93);transform-origin:100% 0;">-4.1982 Hz</div>
<div class="t" style="top:817.91px;font-size:17px;color:#ececec;right:21.00px;transform:scaleX(0.975);transform-origin:100% 0;">1/3/2020 5:46:20 PM</div>
</body></html>
